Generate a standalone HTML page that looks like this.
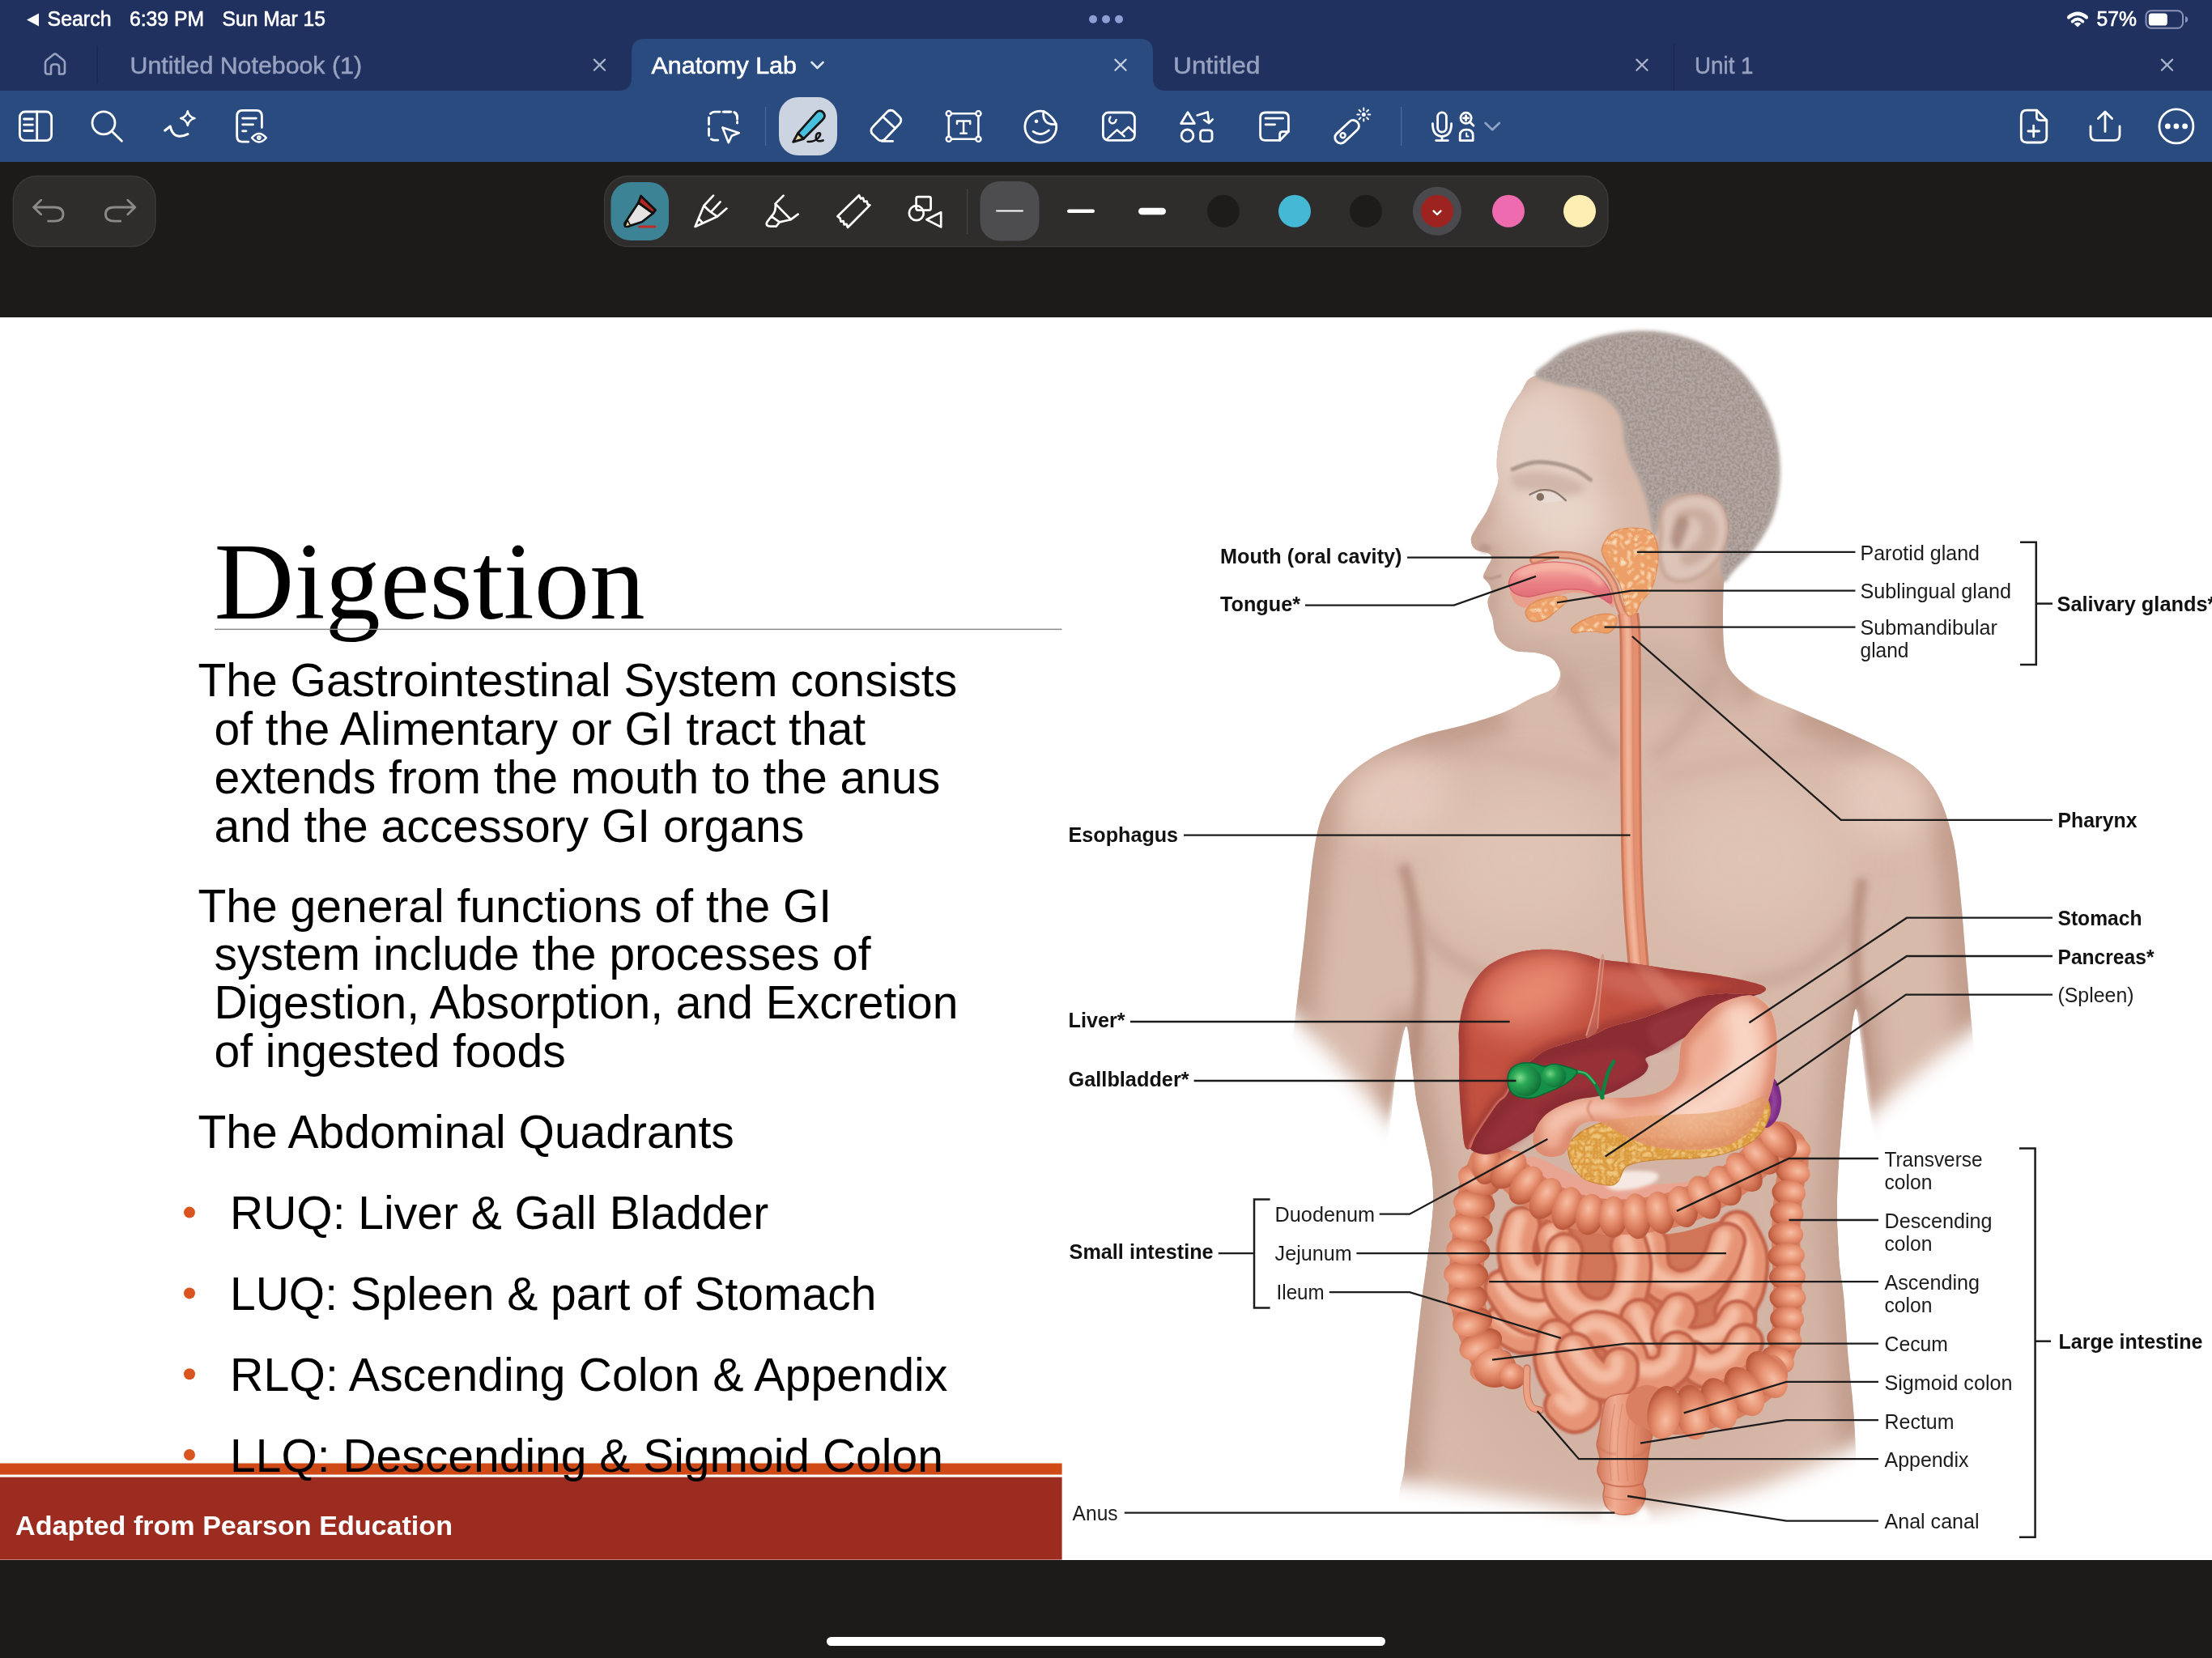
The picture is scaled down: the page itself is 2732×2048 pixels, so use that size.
<!DOCTYPE html>
<html lang="en"><head><meta charset="utf-8"><title>Anatomy Lab</title>
<style>
html,body{margin:0;padding:0;background:#1c1b19;}
body{width:2732px;height:2048px;overflow:hidden;position:relative;font-family:'Liberation Sans',sans-serif;}
#status{position:absolute;left:0;top:0;width:2732px;height:112px;background:#21315f;}
#toolbar{position:absolute;left:0;top:112px;width:2732px;height:88px;background:#294b7f;}
#work{position:absolute;left:0;top:200px;width:2732px;height:1848px;background:#1c1b19;}
#slide{position:absolute;left:0;top:391.5px;width:2732px;height:1535px;background:#fff;}
#home{position:absolute;left:1021px;top:2021.8px;width:690px;height:11px;border-radius:5.5px;background:#fff;}
svg{position:absolute;left:0;top:0;}
</style></head><body>
<div id="status"></div><div id="toolbar"></div><div id="work"></div><div id="slide"></div><div id="home"></div>
<svg width="2732" height="2048" viewBox="0 0 2732 2048">
<defs>
<clipPath id="cSlide"><rect x="0" y="391.5" width="2732" height="1535"/></clipPath>
<clipPath id="lassoClip"><path d="M870 130 H915 V153 H888 V180 H870 Z"/></clipPath>
<filter id="b1" filterUnits="userSpaceOnUse" x="1350" y="380" width="1400" height="1560"><feGaussianBlur stdDeviation="1"/></filter>
<filter id="b2" filterUnits="userSpaceOnUse" x="1350" y="380" width="1400" height="1560"><feGaussianBlur stdDeviation="2"/></filter>
<filter id="b3" filterUnits="userSpaceOnUse" x="1350" y="380" width="1400" height="1560"><feGaussianBlur stdDeviation="3"/></filter>
<filter id="b5" filterUnits="userSpaceOnUse" x="1350" y="380" width="1400" height="1560"><feGaussianBlur stdDeviation="5"/></filter>
<filter id="b8" filterUnits="userSpaceOnUse" x="1350" y="380" width="1400" height="1560"><feGaussianBlur stdDeviation="8"/></filter>
<filter id="b12" filterUnits="userSpaceOnUse" x="1350" y="380" width="1400" height="1560"><feGaussianBlur stdDeviation="12"/></filter>
<filter id="b20" filterUnits="userSpaceOnUse" x="1350" y="380" width="1400" height="1560"><feGaussianBlur stdDeviation="20"/></filter>
<filter id="b35" filterUnits="userSpaceOnUse" x="1350" y="380" width="1400" height="1560"><feGaussianBlur stdDeviation="35"/></filter>
<filter id="hairTex" filterUnits="userSpaceOnUse" x="1880" y="400" width="330" height="340">
<feTurbulence type="fractalNoise" baseFrequency="0.3" numOctaves="2" seed="3" result="n"/>
<feColorMatrix in="n" type="matrix" values="0 0 0 0 0.46  0 0 0 0 0.40  0 0 0 0 0.38  3.4 0 0 0 -1.15" result="c"/>
<feComposite in="c" in2="SourceGraphic" operator="in"/></filter>
<filter id="lumpTex" x="0" y="0" width="100%" height="100%">
<feTurbulence type="turbulence" baseFrequency="0.12" numOctaves="1" seed="8" result="n"/>
<feColorMatrix in="n" type="matrix" values="0 0 0 0 0.98  0 0 0 0 0.80  0 0 0 0 0.58  2.6 0 0 0 -0.35" result="c"/>
<feComposite in="c" in2="SourceGraphic" operator="in"/></filter>
<radialGradient id="gH" cx="0.42" cy="0.36" r="0.62"><stop offset="0" stop-color="#f6bea4"/><stop offset="0.45" stop-color="#e89373"/><stop offset="0.85" stop-color="#cd6d4e"/><stop offset="1" stop-color="#bb5a3d"/></radialGradient>
<radialGradient id="gH2" cx="0.4" cy="0.35" r="0.65"><stop offset="0" stop-color="#f6bfa6"/><stop offset="0.5" stop-color="#e8987a"/><stop offset="1" stop-color="#c9694e"/></radialGradient>
<linearGradient id="gLiver" x1="0" y1="0" x2="0.6" y2="1"><stop offset="0" stop-color="#b94a42"/><stop offset="0.45" stop-color="#c4574c"/><stop offset="1" stop-color="#9c3436"/></linearGradient>
<radialGradient id="gLiverHi" cx="0.5" cy="0.5" r="0.5"><stop offset="0" stop-color="#df7a68" stop-opacity="0.95"/><stop offset="1" stop-color="#df7a68" stop-opacity="0"/></radialGradient>
<linearGradient id="gStom" x1="0" y1="0" x2="1" y2="0.3"><stop offset="0" stop-color="#eaa58c"/><stop offset="0.5" stop-color="#f6c9b4"/><stop offset="1" stop-color="#e4967a"/></linearGradient>
<radialGradient id="gGall" cx="0.35" cy="0.4" r="0.7"><stop offset="0" stop-color="#7fdc8c"/><stop offset="0.35" stop-color="#2aa755"/><stop offset="1" stop-color="#0d6a35"/></radialGradient>
<linearGradient id="gTongue" x1="0" y1="0" x2="0" y2="1"><stop offset="0" stop-color="#f6b3a2"/><stop offset="0.5" stop-color="#ea8286"/><stop offset="1" stop-color="#dc6474"/></linearGradient>
<linearGradient id="gRect" x1="0" y1="0" x2="1" y2="0"><stop offset="0" stop-color="#cf7558"/><stop offset="0.3" stop-color="#f0ab90"/><stop offset="0.62" stop-color="#e48e70"/><stop offset="1" stop-color="#c5654a"/></linearGradient>
<linearGradient id="gSkinV" x1="0" y1="0" x2="0" y2="1"><stop offset="0" stop-color="#dcc3b6"/><stop offset="1" stop-color="#d9bdb0"/></linearGradient>
<clipPath id="cTorso"><path d="M1950 760 C1920.7 766.7 1935.8 787.5 1932 800 C1928.2 812.5 1929.5 826.5 1927 835 C1924.5 843.5 1922.8 846.5 1917 851 C1911.2 855.5 1902.0 857.2 1892 862 C1882.0 866.8 1870.5 874.5 1857 880 C1843.5 885.5 1825.5 890.8 1811 895 C1796.5 899.2 1781.0 902.0 1770 905 C1759.0 908.0 1755.8 908.8 1745 913 C1734.2 917.2 1717.2 923.5 1705 930 C1692.8 936.5 1681.5 944.0 1672 952 C1662.5 960.0 1654.7 968.3 1648 978 C1641.3 987.7 1636.2 998.0 1632 1010 C1627.8 1022.0 1625.5 1035.0 1623 1050 C1620.5 1065.0 1619.0 1081.7 1617 1100 C1615.0 1118.3 1613.2 1140.0 1611 1160 C1608.8 1180.0 1606.3 1200.0 1604 1220 C1601.7 1240.0 1599.3 1260.0 1597 1280 C1594.7 1300.0 1592.2 1320.0 1590 1340 C1587.8 1360.0 1585.3 1380.0 1584 1400 C1582.7 1420.0 1572.7 1446.7 1582 1460 C1591.3 1473.3 1619.3 1480.0 1640 1480 C1660.7 1480.0 1693.3 1473.3 1706 1460 C1718.7 1446.7 1713.3 1420.0 1716 1400 C1718.7 1380.0 1719.7 1358.0 1722 1340 C1724.3 1322.0 1727.5 1304.0 1730 1292 C1732.5 1280.0 1735.0 1266.7 1737 1268 C1739.0 1269.3 1740.0 1284.8 1742 1300 C1744.0 1315.2 1746.0 1340.7 1749 1359 C1752.0 1377.3 1756.8 1394.8 1760 1410 C1763.2 1425.2 1766.3 1437.5 1768 1450 C1769.7 1462.5 1770.2 1473.3 1770 1485 C1769.8 1496.7 1769.2 1501.2 1767 1520 C1764.8 1538.8 1760.2 1571.7 1757 1598 C1753.8 1624.3 1750.8 1651.5 1748 1678 C1745.2 1704.5 1742.2 1735.0 1740 1757 C1737.8 1779.0 1736.2 1787.8 1735 1810 C1733.8 1832.2 1713.8 1872.5 1733 1890 C1752.2 1907.5 1805.5 1910.0 1850 1915 C1894.5 1920.0 1950.0 1920.0 2000 1920 C2050.0 1920.0 2101.3 1920.0 2150 1915 C2198.7 1910.0 2268.3 1909.2 2292 1890 C2315.7 1870.8 2292.5 1825.0 2292 1800 C2291.5 1775.0 2290.5 1760.0 2289 1740 C2287.5 1720.0 2285.0 1703.3 2283 1680 C2281.0 1656.7 2278.8 1620.0 2277 1600 C2275.2 1580.0 2273.3 1576.7 2272 1560 C2270.7 1543.3 2269.2 1519.8 2269 1500 C2268.8 1480.2 2269.7 1463.3 2271 1441 C2272.3 1418.7 2274.8 1390.3 2277 1366 C2279.2 1341.7 2281.5 1315.0 2284 1295 C2286.5 1275.0 2289.5 1246.7 2292 1246 C2294.5 1245.3 2296.3 1271.0 2299 1291 C2301.7 1311.0 2304.8 1344.5 2308 1366 C2311.2 1387.5 2315.0 1404.3 2318 1420 C2321.0 1435.7 2314.0 1450.0 2326 1460 C2338.0 1470.0 2369.0 1480.0 2390 1480 C2411.0 1480.0 2442.3 1473.3 2452 1460 C2461.7 1446.7 2449.8 1420.0 2448 1400 C2446.2 1380.0 2443.0 1360.7 2441 1340 C2439.0 1319.3 2437.8 1297.7 2436 1276 C2434.2 1254.3 2432.2 1235.3 2430 1210 C2427.8 1184.7 2425.3 1149.2 2423 1124 C2420.7 1098.8 2418.3 1075.5 2416 1059 C2413.7 1042.5 2412.0 1036.2 2409 1025 C2406.0 1013.8 2402.3 1001.8 2398 992 C2393.7 982.2 2389.3 974.0 2383 966 C2376.7 958.0 2369.7 950.8 2360 944 C2350.3 937.2 2339.0 932.0 2325 925 C2311.0 918.0 2293.5 909.8 2276 902 C2258.5 894.2 2237.7 885.7 2220 878 C2202.3 870.3 2183.8 864.3 2170 856 C2156.2 847.7 2144.3 837.3 2137 828 C2129.7 818.7 2130.8 811.3 2126 800 C2121.2 788.7 2137.3 766.7 2108 760 C2078.7 753.3 1979.3 753.3 1950 760 Z"/></clipPath>
<clipPath id="cFace"><path d="M1897.1 464.0 C1882.8 468.3 1884.8 475.5 1878.7 483.9 C1872.6 492.3 1865.0 503.4 1860.3 514.6 C1855.6 525.9 1852.4 541.2 1850.5 551.4 C1848.6 561.6 1848.7 569.3 1848.7 575.9 C1848.8 582.5 1851.1 586.1 1850.8 591.2 C1850.5 596.3 1849.2 599.9 1846.8 606.5 C1844.4 613.1 1840.4 623.3 1836.4 631.0 C1832.4 638.7 1826.2 646.6 1822.9 652.5 C1819.6 658.4 1817.0 662.0 1816.8 666.3 C1816.6 670.6 1818.3 675.6 1822.0 678.5 C1825.7 681.4 1835.6 681.8 1838.9 683.8 C1842.2 685.8 1842.3 687.8 1841.9 690.8 C1841.5 693.8 1838.0 697.9 1836.4 701.5 C1834.8 705.1 1831.7 709.0 1832.1 712.3 C1832.5 715.6 1837.3 718.5 1838.9 721.5 C1840.5 724.5 1842.1 727.3 1841.9 730.6 C1841.7 733.9 1838.1 737.8 1837.6 741.4 C1837.1 745.0 1837.9 748.3 1838.9 752.1 C1839.9 755.9 1842.2 759.5 1843.5 764.4 C1844.8 769.2 1844.5 776.1 1846.5 781.2 C1848.5 786.3 1851.4 791.2 1855.7 795.0 C1860.0 798.8 1865.7 802.3 1872.6 804.2 C1879.5 806.1 1889.7 804.8 1897.1 806.3 C1904.5 807.8 1912.2 809.9 1917.0 813.4 C1921.8 816.9 1924.4 822.4 1926.2 827.2 C1928.0 832.1 1928.5 837.9 1927.8 842.5 C1927.1 847.1 1924.2 850.2 1922.2 854.8 C1920.2 859.4 1913.5 860.4 1915.5 870.1 C1917.5 879.8 1905.3 903.8 1933.9 913.0 C1962.5 922.2 2043.7 925.3 2087.1 925.3 C2130.5 925.3 2178.1 922.2 2194.4 913.0 C2210.8 903.8 2190.8 880.3 2185.2 870.1 C2179.6 859.9 2168.7 858.7 2160.7 851.7 C2152.7 844.7 2142.6 836.7 2137.4 828.1 C2132.2 819.5 2130.9 813.9 2129.4 799.9 C2127.9 785.9 2127.8 760.3 2128.2 744.4 C2128.6 728.5 2128.2 722.5 2131.6 704.6 C2135.0 686.7 2145.6 663.8 2148.4 637.2 C2151.2 610.6 2163.7 574.8 2148.4 545.2 C2133.1 515.6 2087.2 473.9 2056.5 459.4 C2025.8 444.8 1991.1 457.1 1964.5 457.9 C1937.9 458.7 1911.4 459.7 1897.1 464.0 Z"/></clipPath>
<clipPath id="cNoCore"><path clip-rule="evenodd" d="M1400 1000 H2700 V2000 H1400 Z M1738 1262 L1742 1300 L1749 1359 L1760 1410 L1768 1450 L1770 1485 L1767 1520 L1757 1598 L1748 1678 L1740 1757 L1735 1810 L1733 1960 L2292 1960 L2292 1800 L2289 1740 L2283 1680 L2277 1600 L2272 1560 L2269 1500 L2271 1441 L2277 1366 L2284 1295 L2293 1240 Z"/></clipPath>
<clipPath id="cLiverL"><path d="M1802.3 1299.2 C1802.2 1287.9 1801.0 1281.3 1801.9 1271.4 C1802.8 1261.5 1804.9 1249.2 1807.9 1239.6 C1810.9 1230.0 1814.5 1221.7 1819.8 1213.7 C1825.1 1205.7 1831.4 1197.8 1839.7 1191.8 C1848.0 1185.8 1859.3 1181.1 1869.6 1177.9 C1879.9 1174.8 1890.8 1173.5 1901.4 1172.9 C1912.0 1172.3 1923.2 1173.1 1933.2 1174.3 C1943.2 1175.5 1953.8 1178.1 1961.1 1179.9 C1968.4 1181.7 1970.7 1183.6 1977.0 1184.9 C1983.3 1186.2 1990.3 1186.7 1998.9 1187.8 C2007.5 1188.9 2017.1 1190.1 2028.7 1191.8 C2040.3 1193.5 2055.2 1196.0 2068.5 1197.8 C2081.8 1199.6 2095.0 1200.8 2108.3 1202.8 C2121.6 1204.8 2137.5 1207.5 2148.1 1209.7 C2158.7 1211.9 2166.4 1213.9 2171.9 1215.7 C2177.4 1217.5 2180.2 1218.9 2180.9 1220.7 C2181.6 1222.5 2179.7 1225.4 2175.9 1226.6 C2172.1 1227.8 2165.9 1227.9 2158.0 1228.0 C2150.1 1228.1 2137.8 1226.8 2128.2 1227.2 C2118.6 1227.6 2108.6 1228.7 2100.3 1230.6 C2092.0 1232.5 2087.0 1235.3 2078.4 1238.6 C2069.8 1241.9 2058.5 1246.8 2048.6 1250.5 C2038.7 1254.2 2028.8 1257.5 2018.8 1260.5 C2008.8 1263.5 1997.9 1265.2 1988.9 1268.4 C1980.0 1271.6 1973.4 1276.2 1965.1 1279.4 C1956.8 1282.6 1948.5 1284.3 1939.2 1287.3 C1929.9 1290.3 1917.7 1293.3 1909.4 1297.3 C1901.1 1301.3 1895.2 1307.6 1889.5 1311.2 C1883.8 1314.8 1880.2 1312.5 1875.5 1319.1 C1870.8 1325.7 1865.9 1343.7 1861.6 1351.0 C1857.3 1358.3 1854.0 1357.6 1849.7 1362.9 C1845.4 1368.2 1840.5 1375.8 1835.8 1382.8 C1831.1 1389.8 1825.1 1398.7 1821.8 1404.7 C1818.5 1410.7 1818.1 1416.9 1815.9 1418.6 C1813.8 1420.2 1810.7 1421.2 1808.9 1414.6 C1807.1 1408.0 1806.0 1391.4 1804.9 1378.8 C1803.8 1366.2 1802.7 1352.3 1802.3 1339.0 C1801.9 1325.7 1802.4 1310.5 1802.3 1299.2 Z"/></clipPath>
<clipPath id="cStom"><path d="M2162.0 1229.6 C2168.6 1230.6 2175.3 1235.3 2179.9 1239.6 C2184.5 1243.9 2187.4 1248.9 2189.8 1255.5 C2192.2 1262.1 2193.5 1270.5 2194.2 1279.4 C2194.9 1288.4 2194.5 1299.3 2193.8 1309.2 C2193.1 1319.1 2192.1 1329.0 2189.8 1339.0 C2187.5 1349.0 2184.2 1359.6 2179.9 1368.9 C2175.6 1378.2 2171.0 1387.4 2164.0 1394.7 C2157.0 1402.0 2147.4 1408.4 2138.1 1412.6 C2128.8 1416.8 2119.9 1418.4 2108.3 1419.6 C2096.7 1420.8 2080.1 1420.3 2068.5 1419.6 C2056.9 1418.9 2047.7 1417.8 2038.7 1415.6 C2029.8 1413.4 2022.4 1410.2 2014.8 1406.7 C2007.2 1403.2 1999.5 1398.2 1992.9 1394.7 C1986.3 1391.2 1980.3 1387.3 1975.0 1385.8 C1969.7 1384.3 1965.4 1384.8 1961.1 1385.8 C1956.8 1386.8 1952.3 1388.5 1949.1 1391.7 C1945.8 1394.9 1943.5 1400.6 1941.6 1404.7 C1939.7 1408.8 1939.7 1412.9 1937.6 1416.6 C1935.5 1420.2 1933.2 1424.5 1929.2 1426.6 C1925.2 1428.6 1918.3 1429.5 1913.3 1428.9 C1908.3 1428.3 1902.7 1426.4 1899.4 1423.0 C1896.1 1419.6 1893.7 1413.8 1893.4 1408.7 C1893.1 1403.7 1894.7 1398.0 1897.4 1392.7 C1900.1 1387.4 1904.1 1381.4 1909.4 1376.8 C1914.7 1372.2 1922.6 1367.9 1929.2 1364.9 C1935.8 1361.9 1942.5 1360.4 1949.1 1358.9 C1955.7 1357.4 1962.4 1356.4 1969.0 1355.9 C1975.6 1355.4 1982.3 1355.9 1988.9 1355.9 C1995.5 1355.9 2002.2 1356.2 2008.8 1355.9 C2015.4 1355.6 2022.1 1355.2 2028.7 1354.0 C2035.3 1352.8 2042.6 1351.5 2048.6 1349.0 C2054.6 1346.5 2060.5 1343.0 2064.5 1339.0 C2068.5 1335.0 2070.8 1330.4 2072.5 1325.1 C2074.2 1319.8 2073.8 1313.2 2074.5 1307.2 C2075.2 1301.2 2074.8 1294.3 2076.5 1289.3 C2078.2 1284.3 2080.4 1282.4 2084.4 1277.4 C2088.4 1272.4 2094.7 1265.2 2100.3 1259.5 C2105.9 1253.8 2111.6 1247.8 2118.2 1243.5 C2124.8 1239.2 2132.8 1235.9 2140.1 1233.6 C2147.4 1231.3 2155.4 1228.6 2162.0 1229.6 Z"/></clipPath>
<filter id="pancTex" x="0" y="0" width="100%" height="100%">
<feTurbulence type="turbulence" baseFrequency="0.13" numOctaves="2" seed="5" result="n"/>
<feColorMatrix in="n" type="matrix" values="0 0 0 0 0.96  0 0 0 0 0.77  0 0 0 0 0.38  2.4 0 0 0 -0.3" result="c"/>
<feComposite in="c" in2="SourceGraphic" operator="in"/></filter>
</defs>
<g id="figure" clip-path="url(#cSlide)">
<g id="body">
<path d="M1950 760 C1920.7 766.7 1935.8 787.5 1932 800 C1928.2 812.5 1929.5 826.5 1927 835 C1924.5 843.5 1922.8 846.5 1917 851 C1911.2 855.5 1902.0 857.2 1892 862 C1882.0 866.8 1870.5 874.5 1857 880 C1843.5 885.5 1825.5 890.8 1811 895 C1796.5 899.2 1781.0 902.0 1770 905 C1759.0 908.0 1755.8 908.8 1745 913 C1734.2 917.2 1717.2 923.5 1705 930 C1692.8 936.5 1681.5 944.0 1672 952 C1662.5 960.0 1654.7 968.3 1648 978 C1641.3 987.7 1636.2 998.0 1632 1010 C1627.8 1022.0 1625.5 1035.0 1623 1050 C1620.5 1065.0 1619.0 1081.7 1617 1100 C1615.0 1118.3 1613.2 1140.0 1611 1160 C1608.8 1180.0 1606.3 1200.0 1604 1220 C1601.7 1240.0 1599.3 1260.0 1597 1280 C1594.7 1300.0 1592.2 1320.0 1590 1340 C1587.8 1360.0 1585.3 1380.0 1584 1400 C1582.7 1420.0 1572.7 1446.7 1582 1460 C1591.3 1473.3 1619.3 1480.0 1640 1480 C1660.7 1480.0 1693.3 1473.3 1706 1460 C1718.7 1446.7 1713.3 1420.0 1716 1400 C1718.7 1380.0 1719.7 1358.0 1722 1340 C1724.3 1322.0 1727.5 1304.0 1730 1292 C1732.5 1280.0 1735.0 1266.7 1737 1268 C1739.0 1269.3 1740.0 1284.8 1742 1300 C1744.0 1315.2 1746.0 1340.7 1749 1359 C1752.0 1377.3 1756.8 1394.8 1760 1410 C1763.2 1425.2 1766.3 1437.5 1768 1450 C1769.7 1462.5 1770.2 1473.3 1770 1485 C1769.8 1496.7 1769.2 1501.2 1767 1520 C1764.8 1538.8 1760.2 1571.7 1757 1598 C1753.8 1624.3 1750.8 1651.5 1748 1678 C1745.2 1704.5 1742.2 1735.0 1740 1757 C1737.8 1779.0 1736.2 1787.8 1735 1810 C1733.8 1832.2 1713.8 1872.5 1733 1890 C1752.2 1907.5 1805.5 1910.0 1850 1915 C1894.5 1920.0 1950.0 1920.0 2000 1920 C2050.0 1920.0 2101.3 1920.0 2150 1915 C2198.7 1910.0 2268.3 1909.2 2292 1890 C2315.7 1870.8 2292.5 1825.0 2292 1800 C2291.5 1775.0 2290.5 1760.0 2289 1740 C2287.5 1720.0 2285.0 1703.3 2283 1680 C2281.0 1656.7 2278.8 1620.0 2277 1600 C2275.2 1580.0 2273.3 1576.7 2272 1560 C2270.7 1543.3 2269.2 1519.8 2269 1500 C2268.8 1480.2 2269.7 1463.3 2271 1441 C2272.3 1418.7 2274.8 1390.3 2277 1366 C2279.2 1341.7 2281.5 1315.0 2284 1295 C2286.5 1275.0 2289.5 1246.7 2292 1246 C2294.5 1245.3 2296.3 1271.0 2299 1291 C2301.7 1311.0 2304.8 1344.5 2308 1366 C2311.2 1387.5 2315.0 1404.3 2318 1420 C2321.0 1435.7 2314.0 1450.0 2326 1460 C2338.0 1470.0 2369.0 1480.0 2390 1480 C2411.0 1480.0 2442.3 1473.3 2452 1460 C2461.7 1446.7 2449.8 1420.0 2448 1400 C2446.2 1380.0 2443.0 1360.7 2441 1340 C2439.0 1319.3 2437.8 1297.7 2436 1276 C2434.2 1254.3 2432.2 1235.3 2430 1210 C2427.8 1184.7 2425.3 1149.2 2423 1124 C2420.7 1098.8 2418.3 1075.5 2416 1059 C2413.7 1042.5 2412.0 1036.2 2409 1025 C2406.0 1013.8 2402.3 1001.8 2398 992 C2393.7 982.2 2389.3 974.0 2383 966 C2376.7 958.0 2369.7 950.8 2360 944 C2350.3 937.2 2339.0 932.0 2325 925 C2311.0 918.0 2293.5 909.8 2276 902 C2258.5 894.2 2237.7 885.7 2220 878 C2202.3 870.3 2183.8 864.3 2170 856 C2156.2 847.7 2144.3 837.3 2137 828 C2129.7 818.7 2130.8 811.3 2126 800 C2121.2 788.7 2137.3 766.7 2108 760 C2078.7 753.3 1979.3 753.3 1950 760 Z" fill="#d8baab" />
<path d="M1897.1 464.0 C1882.8 468.3 1884.8 475.5 1878.7 483.9 C1872.6 492.3 1865.0 503.4 1860.3 514.6 C1855.6 525.9 1852.4 541.2 1850.5 551.4 C1848.6 561.6 1848.7 569.3 1848.7 575.9 C1848.8 582.5 1851.1 586.1 1850.8 591.2 C1850.5 596.3 1849.2 599.9 1846.8 606.5 C1844.4 613.1 1840.4 623.3 1836.4 631.0 C1832.4 638.7 1826.2 646.6 1822.9 652.5 C1819.6 658.4 1817.0 662.0 1816.8 666.3 C1816.6 670.6 1818.3 675.6 1822.0 678.5 C1825.7 681.4 1835.6 681.8 1838.9 683.8 C1842.2 685.8 1842.3 687.8 1841.9 690.8 C1841.5 693.8 1838.0 697.9 1836.4 701.5 C1834.8 705.1 1831.7 709.0 1832.1 712.3 C1832.5 715.6 1837.3 718.5 1838.9 721.5 C1840.5 724.5 1842.1 727.3 1841.9 730.6 C1841.7 733.9 1838.1 737.8 1837.6 741.4 C1837.1 745.0 1837.9 748.3 1838.9 752.1 C1839.9 755.9 1842.2 759.5 1843.5 764.4 C1844.8 769.2 1844.5 776.1 1846.5 781.2 C1848.5 786.3 1851.4 791.2 1855.7 795.0 C1860.0 798.8 1865.7 802.3 1872.6 804.2 C1879.5 806.1 1889.7 804.8 1897.1 806.3 C1904.5 807.8 1912.2 809.9 1917.0 813.4 C1921.8 816.9 1924.4 822.4 1926.2 827.2 C1928.0 832.1 1928.5 837.9 1927.8 842.5 C1927.1 847.1 1924.2 850.2 1922.2 854.8 C1920.2 859.4 1913.5 860.4 1915.5 870.1 C1917.5 879.8 1905.3 903.8 1933.9 913.0 C1962.5 922.2 2043.7 925.3 2087.1 925.3 C2130.5 925.3 2178.1 922.2 2194.4 913.0 C2210.8 903.8 2190.8 880.3 2185.2 870.1 C2179.6 859.9 2168.7 858.7 2160.7 851.7 C2152.7 844.7 2142.6 836.7 2137.4 828.1 C2132.2 819.5 2130.9 813.9 2129.4 799.9 C2127.9 785.9 2127.8 760.3 2128.2 744.4 C2128.6 728.5 2128.2 722.5 2131.6 704.6 C2135.0 686.7 2145.6 663.8 2148.4 637.2 C2151.2 610.6 2163.7 574.8 2148.4 545.2 C2133.1 515.6 2087.2 473.9 2056.5 459.4 C2025.8 444.8 1991.1 457.1 1964.5 457.9 C1937.9 458.7 1911.4 459.7 1897.1 464.0 Z" fill="#d8baab" />
<g clip-path="url(#cFace)">
<path d="M1897.1 464.0 C1894.0 467.3 1884.8 475.5 1878.7 483.9 C1872.6 492.3 1865.0 503.4 1860.3 514.6 C1855.6 525.9 1852.4 541.2 1850.5 551.4 C1848.6 561.6 1848.7 569.3 1848.7 575.9 C1848.8 582.5 1851.1 586.1 1850.8 591.2 C1850.5 596.3 1849.2 599.9 1846.8 606.5 C1844.4 613.1 1840.4 623.3 1836.4 631.0 C1832.4 638.7 1826.2 646.6 1822.9 652.5 C1819.6 658.4 1817.0 662.0 1816.8 666.3 C1816.6 670.6 1818.3 675.6 1822.0 678.5 C1825.7 681.4 1835.6 681.8 1838.9 683.8 C1842.2 685.8 1842.3 687.8 1841.9 690.8 C1841.5 693.8 1838.0 697.9 1836.4 701.5 C1834.8 705.1 1831.7 709.0 1832.1 712.3 C1832.5 715.6 1837.3 718.5 1838.9 721.5 C1840.5 724.5 1842.1 727.3 1841.9 730.6 C1841.7 733.9 1838.1 737.8 1837.6 741.4 C1837.1 745.0 1837.9 748.3 1838.9 752.1 C1839.9 755.9 1842.2 759.5 1843.5 764.4 C1844.8 769.2 1844.5 776.1 1846.5 781.2 C1848.5 786.3 1851.4 791.2 1855.7 795.0 C1860.0 798.8 1865.7 802.3 1872.6 804.2 C1879.5 806.1 1889.7 804.8 1897.1 806.3 C1904.5 807.8 1912.2 809.9 1917.0 813.4 C1921.8 816.9 1924.4 822.4 1926.2 827.2 C1928.0 832.1 1928.5 837.9 1927.8 842.5 C1927.1 847.1 1923.1 852.8 1922.2 854.8" fill="none" stroke="#c3a091" stroke-width="26" filter="url(#b8)" opacity="0.7"/>
<path d="M2131.6 704.6 C2131.0 711.2 2128.6 728.5 2128.2 744.4 C2127.8 760.3 2127.9 785.9 2129.4 799.9 C2130.9 813.9 2130.7 818.8 2137.4 828.1 C2144.2 837.5 2164.5 851.4 2169.9 856.0" fill="none" stroke="#bb9483" stroke-width="40" filter="url(#b12)" opacity="0.75"/>
<ellipse cx="1900" cy="560" rx="70" ry="90" fill="#e6d2c7" filter="url(#b20)" opacity="0.9"/>
<path d="M1921.6 814.9 C1927.7 806.2 1947.1 803.7 1964.5 799.6 C1981.9 795.5 2005.4 790.4 2025.8 790.4 C2046.2 790.4 2069.7 794.5 2087.1 799.6 C2104.5 804.7 2119.8 812.4 2130.0 821.1 C2140.2 829.8 2150.4 841.5 2148.4 851.7 C2146.4 861.9 2138.2 879.2 2117.8 882.3 C2097.4 885.4 2051.3 872.1 2025.8 870.1 C2000.2 868.1 1980.8 873.2 1964.5 870.1 C1948.2 867.0 1935.0 860.9 1927.8 851.7 C1920.6 842.5 1915.5 823.6 1921.6 814.9 Z" fill="#cdb0a3" filter="url(#b12)" opacity="0.8"/>
<path d="M1851.1 753.6 C1855.7 752.1 1867.0 772.0 1878.7 778.1 C1890.5 784.2 1907.3 788.9 1921.6 790.4 C1935.9 791.9 1954.3 785.8 1964.5 787.3 C1974.7 788.8 1988.0 795.5 1982.9 799.6 C1977.8 803.7 1951.3 810.9 1933.9 811.9 C1916.5 812.9 1892.5 809.8 1878.7 805.7 C1864.9 801.6 1855.7 796.0 1851.1 787.3 C1846.5 778.6 1846.5 755.1 1851.1 753.6 Z" fill="#cfb2a5" filter="url(#b8)" opacity="0.7"/>
<ellipse cx="1935" cy="640" rx="55" ry="50" fill="#ead6cb" filter="url(#b20)" opacity="0.9"/>
<path d="M1866.5 588.1 C1870.6 584.5 1885.9 582.0 1897.1 582.0 C1908.3 582.0 1923.7 584.5 1933.9 588.1 C1944.1 591.7 1958.4 599.4 1958.4 603.5 C1958.4 607.6 1944.1 612.2 1933.9 612.7 C1923.7 613.2 1907.3 608.0 1897.1 606.5 C1886.9 605.0 1877.7 606.6 1872.6 603.5 C1867.5 600.4 1862.4 591.7 1866.5 588.1 Z" fill="#cbb0a4" filter="url(#b5)" opacity="0.8"/>
</g>
<g clip-path="url(#cTorso)">
<path d="M1857 880 C1849.3 882.5 1825.5 890.8 1811 895 C1796.5 899.2 1781.0 902.0 1770 905 C1759.0 908.0 1755.8 908.8 1745 913 C1734.2 917.2 1717.2 923.5 1705 930 C1692.8 936.5 1681.5 944.0 1672 952 C1662.5 960.0 1654.7 968.3 1648 978 C1641.3 987.7 1636.2 998.0 1632 1010 C1627.8 1022.0 1625.5 1035.0 1623 1050 C1620.5 1065.0 1619.0 1081.7 1617 1100 C1615.0 1118.3 1613.2 1140.0 1611 1160 C1608.8 1180.0 1606.3 1200.0 1604 1220 C1601.7 1240.0 1599.3 1260.0 1597 1280 C1594.7 1300.0 1592.2 1320.0 1590 1340 C1587.8 1360.0 1585.3 1380.0 1584 1400 C1582.7 1420.0 1572.7 1446.7 1582 1460 C1591.3 1473.3 1619.3 1480.0 1640 1480 C1660.7 1480.0 1693.3 1473.3 1706 1460 C1718.7 1446.7 1713.3 1420.0 1716 1400 C1718.7 1380.0 1719.7 1358.0 1722 1340 C1724.3 1322.0 1727.5 1304.0 1730 1292 C1732.5 1280.0 1735.0 1266.7 1737 1268 C1739.0 1269.3 1740.0 1284.8 1742 1300 C1744.0 1315.2 1746.0 1340.7 1749 1359 C1752.0 1377.3 1756.8 1394.8 1760 1410 C1763.2 1425.2 1766.3 1437.5 1768 1450 C1769.7 1462.5 1770.2 1473.3 1770 1485 C1769.8 1496.7 1769.2 1501.2 1767 1520 C1764.8 1538.8 1760.2 1571.7 1757 1598 C1753.8 1624.3 1750.8 1651.5 1748 1678 C1745.2 1704.5 1742.2 1735.0 1740 1757 C1737.8 1779.0 1736.2 1787.8 1735 1810 C1733.8 1832.2 1713.8 1872.5 1733 1890 C1752.2 1907.5 1805.5 1910.0 1850 1915 C1894.5 1920.0 1950.0 1920.0 2000 1920 C2050.0 1920.0 2101.3 1920.0 2150 1915 C2198.7 1910.0 2268.3 1909.2 2292 1890 C2315.7 1870.8 2292.5 1825.0 2292 1800 C2291.5 1775.0 2290.5 1760.0 2289 1740 C2287.5 1720.0 2285.0 1703.3 2283 1680 C2281.0 1656.7 2278.8 1620.0 2277 1600 C2275.2 1580.0 2273.3 1576.7 2272 1560 C2270.7 1543.3 2269.2 1519.8 2269 1500 C2268.8 1480.2 2269.7 1463.3 2271 1441 C2272.3 1418.7 2274.8 1390.3 2277 1366 C2279.2 1341.7 2281.5 1315.0 2284 1295 C2286.5 1275.0 2289.5 1246.7 2292 1246 C2294.5 1245.3 2296.3 1271.0 2299 1291 C2301.7 1311.0 2304.8 1344.5 2308 1366 C2311.2 1387.5 2315.0 1404.3 2318 1420 C2321.0 1435.7 2314.0 1450.0 2326 1460 C2338.0 1470.0 2369.0 1480.0 2390 1480 C2411.0 1480.0 2442.3 1473.3 2452 1460 C2461.7 1446.7 2449.8 1420.0 2448 1400 C2446.2 1380.0 2443.0 1360.7 2441 1340 C2439.0 1319.3 2437.8 1297.7 2436 1276 C2434.2 1254.3 2432.2 1235.3 2430 1210 C2427.8 1184.7 2425.3 1149.2 2423 1124 C2420.7 1098.8 2418.3 1075.5 2416 1059 C2413.7 1042.5 2412.0 1036.2 2409 1025 C2406.0 1013.8 2402.3 1001.8 2398 992 C2393.7 982.2 2389.3 974.0 2383 966 C2376.7 958.0 2369.7 950.8 2360 944 C2350.3 937.2 2339.0 932.0 2325 925 C2311.0 918.0 2293.5 909.8 2276 902 C2258.5 894.2 2229.3 882.0 2220 878" fill="none" stroke="#bb9483" stroke-width="46" filter="url(#b12)" opacity="0.75"/>
<ellipse cx="1725" cy="985" rx="70" ry="55" fill="#e6cbbd" filter="url(#b20)" opacity="0.9"/>
<ellipse cx="2330" cy="985" rx="60" ry="55" fill="#e6cbbd" filter="url(#b20)" opacity="0.9"/>
<ellipse cx="1880" cy="1060" rx="110" ry="90" fill="#e1c6b8" filter="url(#b35)" opacity="0.8"/>
<ellipse cx="2160" cy="1060" rx="110" ry="90" fill="#e1c6b8" filter="url(#b35)" opacity="0.8"/>
<path d="M1733 1068 Q1750 1120 1755 1207 Q1752 1260 1741 1330" fill="none" stroke="#b68c7d" stroke-width="14" filter="url(#b5)" opacity="0.85"/>
<path d="M2300 1085 Q2290 1150 2292 1200 Q2296 1260 2303 1330" fill="none" stroke="#b68c7d" stroke-width="14" filter="url(#b5)" opacity="0.85"/>
<path d="M1745 1130 Q1790 1210 1900 1215" fill="none" stroke="#c4a092" stroke-width="16" filter="url(#b8)" opacity="0.7"/>
<path d="M2290 1130 Q2250 1210 2150 1215" fill="none" stroke="#c4a092" stroke-width="16" filter="url(#b8)" opacity="0.7"/>
<path d="M1935 830 Q1960 900 2000 935" fill="none" stroke="#c4a092" stroke-width="22" filter="url(#b8)" opacity="0.7"/>
<path d="M2120 830 Q2090 900 2040 935" fill="none" stroke="#c4a092" stroke-width="18" filter="url(#b8)" opacity="0.55"/>
<path d="M1780 925 Q1880 930 1990 960" fill="none" stroke="#ccab9e" stroke-width="14" filter="url(#b8)" opacity="0.6"/>
<path d="M2290 925 Q2180 930 2050 960" fill="none" stroke="#ccab9e" stroke-width="14" filter="url(#b8)" opacity="0.6"/>
<ellipse cx="2010" cy="1560" rx="260" ry="300" fill="#cfae9f" filter="url(#b35)" opacity="0.55"/>
</g>
<g clip-path="url(#cNoCore)">
<path d="M1738 1268 L1727 1320 L1720 1360 L1712 1400 L1700 1470 L1790 1470 L1760 1300 Z" fill="#fff" filter="url(#b3)"/>
<path d="M2293 1246 L2300 1291 L2309 1366 L2316 1400 L2330 1470 L2250 1470 L2270 1290 Z" fill="#fff" filter="url(#b3)"/>
<path d="M1480 1222 L1560 1230 L1600 1254 L1724 1392 L1750 1430 L1790 1440 L1790 1580 L1480 1580 Z" fill="#fff" filter="url(#b12)"/>
<path d="M1480 1290 L1590 1300 L1700 1420 L1790 1470 L1790 1580 L1480 1580 Z" fill="#fff" filter="url(#b8)"/>
<path d="M2580 1238 L2470 1250 L2436 1270 L2306 1378 L2284 1420 L2250 1440 L2250 1580 L2580 1580 Z" fill="#fff" filter="url(#b12)"/>
<path d="M2580 1310 L2440 1320 L2330 1420 L2250 1470 L2250 1580 L2580 1580 Z" fill="#fff" filter="url(#b8)"/>
</g>
<path d="M1680 1815 L1735 1830 L1800 1840 L1900 1855 L1960 1866 L2050 1866 L2170 1838 L2238 1812 L2292 1784 L2350 1760 L2350 1980 L1680 1980 Z" fill="#fff" filter="url(#b12)"/>
<rect x="1680" y="1885" width="680" height="80" fill="#fff" filter="url(#b5)"/>
<path d="M1897.1 463.1 C1895.6 459.1 1906.3 453.8 1912.4 448.7 C1918.5 443.6 1925.2 437.2 1933.9 432.5 C1942.6 427.8 1954.3 423.5 1964.5 420.2 C1974.7 416.9 1985.0 414.5 1995.2 412.8 C2005.4 411.1 2015.6 410.0 2025.8 409.8 C2036.0 409.6 2046.3 410.3 2056.5 411.9 C2066.7 413.5 2076.9 416.0 2087.1 419.6 C2097.3 423.2 2108.1 427.5 2117.8 433.4 C2127.5 439.3 2137.1 446.9 2145.3 454.8 C2153.5 462.7 2160.4 471.4 2166.8 480.9 C2173.2 490.3 2179.2 500.8 2183.7 511.5 C2188.2 522.2 2191.5 534.5 2193.8 545.2 C2196.1 555.9 2197.1 565.7 2197.4 575.9 C2197.8 586.1 2197.3 596.3 2195.9 606.5 C2194.5 616.7 2192.1 628.0 2188.9 637.2 C2185.7 646.4 2181.2 654.1 2176.6 661.7 C2172.0 669.4 2166.4 677.0 2161.3 683.1 C2156.2 689.2 2150.3 693.9 2146.0 698.5 C2141.7 703.1 2138.2 707.5 2135.5 710.7 C2132.8 713.9 2131.5 719.5 2130.0 717.5 C2128.5 715.5 2126.4 706.8 2126.3 698.5 C2126.2 690.2 2130.8 680.1 2129.4 667.8 C2128.0 655.5 2124.9 634.3 2117.8 624.9 C2110.8 615.5 2097.3 611.9 2087.1 611.1 C2076.9 610.3 2063.4 612.9 2056.5 620.3 C2049.6 627.7 2048.0 649.1 2045.7 655.6 C2043.4 662.1 2043.7 661.2 2042.7 659.2 C2041.7 657.2 2041.0 650.0 2039.6 643.3 C2038.2 636.6 2036.7 627.0 2034.4 618.8 C2032.1 610.6 2029.2 602.5 2025.8 594.3 C2022.4 586.1 2017.4 578.0 2014.2 569.8 C2011.0 561.6 2008.4 553.4 2006.8 545.2 C2005.2 537.0 2006.9 528.4 2004.4 520.7 C2002.0 513.1 1997.7 505.3 1992.1 499.3 C1986.5 493.3 1978.4 488.2 1970.7 484.6 C1963.0 481.0 1954.3 479.8 1946.1 477.8 C1937.9 475.9 1929.8 475.3 1921.6 472.9 C1913.4 470.4 1898.6 467.1 1897.1 463.1 Z" fill="#a1938c" filter="url(#b2)"/>
<path d="M1897.1 463.1 C1895.6 459.1 1906.3 453.8 1912.4 448.7 C1918.5 443.6 1925.2 437.2 1933.9 432.5 C1942.6 427.8 1954.3 423.5 1964.5 420.2 C1974.7 416.9 1985.0 414.5 1995.2 412.8 C2005.4 411.1 2015.6 410.0 2025.8 409.8 C2036.0 409.6 2046.3 410.3 2056.5 411.9 C2066.7 413.5 2076.9 416.0 2087.1 419.6 C2097.3 423.2 2108.1 427.5 2117.8 433.4 C2127.5 439.3 2137.1 446.9 2145.3 454.8 C2153.5 462.7 2160.4 471.4 2166.8 480.9 C2173.2 490.3 2179.2 500.8 2183.7 511.5 C2188.2 522.2 2191.5 534.5 2193.8 545.2 C2196.1 555.9 2197.1 565.7 2197.4 575.9 C2197.8 586.1 2197.3 596.3 2195.9 606.5 C2194.5 616.7 2192.1 628.0 2188.9 637.2 C2185.7 646.4 2181.2 654.1 2176.6 661.7 C2172.0 669.4 2166.4 677.0 2161.3 683.1 C2156.2 689.2 2150.3 693.9 2146.0 698.5 C2141.7 703.1 2138.2 707.5 2135.5 710.7 C2132.8 713.9 2131.5 719.5 2130.0 717.5 C2128.5 715.5 2126.4 706.8 2126.3 698.5 C2126.2 690.2 2130.8 680.1 2129.4 667.8 C2128.0 655.5 2124.9 634.3 2117.8 624.9 C2110.8 615.5 2097.3 611.9 2087.1 611.1 C2076.9 610.3 2063.4 612.9 2056.5 620.3 C2049.6 627.7 2048.0 649.1 2045.7 655.6 C2043.4 662.1 2043.7 661.2 2042.7 659.2 C2041.7 657.2 2041.0 650.0 2039.6 643.3 C2038.2 636.6 2036.7 627.0 2034.4 618.8 C2032.1 610.6 2029.2 602.5 2025.8 594.3 C2022.4 586.1 2017.4 578.0 2014.2 569.8 C2011.0 561.6 2008.4 553.4 2006.8 545.2 C2005.2 537.0 2006.9 528.4 2004.4 520.7 C2002.0 513.1 1997.7 505.3 1992.1 499.3 C1986.5 493.3 1978.4 488.2 1970.7 484.6 C1963.0 481.0 1954.3 479.8 1946.1 477.8 C1937.9 475.9 1929.8 475.3 1921.6 472.9 C1913.4 470.4 1898.6 467.1 1897.1 463.1 Z" fill="#000" filter="url(#hairTex)" opacity="0.9"/>
<path d="M1897.1 463.1 C1895.6 459.1 1906.3 453.8 1912.4 448.7 C1918.5 443.6 1925.2 437.2 1933.9 432.5 C1942.6 427.8 1954.3 423.5 1964.5 420.2 C1974.7 416.9 1985.0 414.5 1995.2 412.8 C2005.4 411.1 2015.6 410.0 2025.8 409.8 C2036.0 409.6 2046.3 410.3 2056.5 411.9 C2066.7 413.5 2076.9 416.0 2087.1 419.6 C2097.3 423.2 2108.1 427.5 2117.8 433.4 C2127.5 439.3 2137.1 446.9 2145.3 454.8 C2153.5 462.7 2160.4 471.4 2166.8 480.9 C2173.2 490.3 2179.2 500.8 2183.7 511.5 C2188.2 522.2 2191.5 534.5 2193.8 545.2 C2196.1 555.9 2197.1 565.7 2197.4 575.9 C2197.8 586.1 2197.3 596.3 2195.9 606.5 C2194.5 616.7 2192.1 628.0 2188.9 637.2 C2185.7 646.4 2181.2 654.1 2176.6 661.7 C2172.0 669.4 2166.4 677.0 2161.3 683.1 C2156.2 689.2 2150.3 693.9 2146.0 698.5 C2141.7 703.1 2138.2 707.5 2135.5 710.7 C2132.8 713.9 2131.5 719.5 2130.0 717.5 C2128.5 715.5 2126.4 706.8 2126.3 698.5 C2126.2 690.2 2130.8 680.1 2129.4 667.8 C2128.0 655.5 2124.9 634.3 2117.8 624.9 C2110.8 615.5 2097.3 611.9 2087.1 611.1 C2076.9 610.3 2063.4 612.9 2056.5 620.3 C2049.6 627.7 2048.0 649.1 2045.7 655.6 C2043.4 662.1 2043.7 661.2 2042.7 659.2 C2041.7 657.2 2041.0 650.0 2039.6 643.3 C2038.2 636.6 2036.7 627.0 2034.4 618.8 C2032.1 610.6 2029.2 602.5 2025.8 594.3 C2022.4 586.1 2017.4 578.0 2014.2 569.8 C2011.0 561.6 2008.4 553.4 2006.8 545.2 C2005.2 537.0 2006.9 528.4 2004.4 520.7 C2002.0 513.1 1997.7 505.3 1992.1 499.3 C1986.5 493.3 1978.4 488.2 1970.7 484.6 C1963.0 481.0 1954.3 479.8 1946.1 477.8 C1937.9 475.9 1929.8 475.3 1921.6 472.9 C1913.4 470.4 1898.6 467.1 1897.1 463.1 Z" fill="none" stroke="#b9aca6" stroke-width="4" filter="url(#b2)" opacity="0.5"/>
<path d="M2051.9 637.2 C2053.2 630.7 2055.2 626.5 2059.5 622.5 C2063.8 618.5 2070.8 615.1 2077.9 613.3 C2085.1 611.4 2095.0 610.2 2102.4 611.4 C2109.8 612.6 2117.4 615.5 2122.4 620.3 C2127.4 625.1 2130.7 633.3 2132.5 640.2 C2134.3 647.1 2134.2 654.6 2133.1 661.7 C2132.0 668.9 2129.3 676.5 2125.7 683.1 C2122.1 689.7 2117.0 696.4 2111.6 701.5 C2106.2 706.6 2099.6 711.1 2093.2 713.8 C2086.8 716.5 2079.2 717.9 2073.3 717.5 C2067.4 717.1 2061.5 714.5 2058.0 711.3 C2054.5 708.1 2053.7 703.2 2052.2 698.5 C2050.7 693.8 2049.2 689.2 2049.1 683.1 C2049.0 677.0 2051.1 669.4 2051.6 661.7 C2052.1 654.1 2050.6 643.7 2051.9 637.2 Z" fill="#dcc4b8" />
<path d="M2051.9 637.2 C2053.2 630.7 2055.2 626.5 2059.5 622.5 C2063.8 618.5 2070.8 615.1 2077.9 613.3 C2085.1 611.4 2095.0 610.2 2102.4 611.4 C2109.8 612.6 2117.4 615.5 2122.4 620.3 C2127.4 625.1 2130.7 633.3 2132.5 640.2 C2134.3 647.1 2134.2 654.6 2133.1 661.7 C2132.0 668.9 2129.3 676.5 2125.7 683.1 C2122.1 689.7 2117.0 696.4 2111.6 701.5 C2106.2 706.6 2099.6 711.1 2093.2 713.8 C2086.8 716.5 2079.2 717.9 2073.3 717.5 C2067.4 717.1 2061.5 714.5 2058.0 711.3 C2054.5 708.1 2053.7 703.2 2052.2 698.5 C2050.7 693.8 2049.2 689.2 2049.1 683.1 C2049.0 677.0 2051.1 669.4 2051.6 661.7 C2052.1 654.1 2050.6 643.7 2051.9 637.2 Z" fill="none" stroke="#c2a092" stroke-width="5" filter="url(#b2)" opacity="0.8" clip-path="url(#cEar)"/>
<path d="M2068.7 637.2 C2070.2 633.6 2077.9 629.3 2084.0 628.0 C2090.1 626.7 2099.6 627.0 2105.5 629.5 C2111.4 632.0 2116.8 637.4 2119.3 643.3 C2121.9 649.2 2122.1 658.2 2120.8 664.8 C2119.5 671.4 2115.7 678.0 2111.6 683.1 C2107.5 688.2 2101.4 692.8 2096.3 695.4 C2091.2 698.0 2084.6 700.0 2081.0 698.5 C2077.4 697.0 2073.9 689.8 2074.9 686.2 C2075.9 682.6 2083.0 681.1 2087.1 677.0 C2091.2 672.9 2097.3 666.8 2099.4 661.7 C2101.5 656.6 2101.5 650.0 2099.4 646.4 C2097.3 642.8 2091.2 639.7 2087.1 640.2 C2083.0 640.7 2078.0 649.9 2074.9 649.4 C2071.8 648.9 2067.2 640.8 2068.7 637.2 Z" fill="#c9aa9c" filter="url(#b3)" opacity="0.85"/>
<path d="M2068.7 646.4 C2071.3 641.3 2076.7 637.2 2079.5 637.2 C2082.3 637.2 2085.6 641.8 2085.6 646.4 C2085.6 651.0 2081.8 659.2 2079.5 664.8 C2077.2 670.4 2074.4 679.6 2071.8 680.1 C2069.2 680.6 2064.6 673.4 2064.1 667.8 C2063.6 662.2 2066.1 651.5 2068.7 646.4 Z" fill="#a98678" filter="url(#b3)" opacity="0.8"/>
<path d="M1868.0 579.6 C1872.3 578.2 1885.1 572.4 1894.0 571.3 C1902.9 570.2 1912.9 571.3 1921.6 572.8 C1930.3 574.3 1938.9 577.2 1946.1 580.5 C1953.2 583.8 1961.4 590.7 1964.5 592.7" fill="none" stroke="#9a857a" stroke-width="5" stroke-linecap="round" filter="url(#b1)" opacity="0.75"/>
<path d="M1891.6 610.2 C1892.1 608.1 1898.7 606.7 1903.2 606.5 C1907.7 606.3 1914.0 607.2 1918.6 609.0 C1923.2 610.8 1931.3 615.4 1930.8 617.3 C1930.3 619.2 1920.6 619.9 1915.5 620.3 C1910.4 620.6 1904.2 621.1 1900.2 619.4 C1896.2 617.7 1891.1 612.4 1891.6 610.2 Z" fill="#e9dcd4" />
<circle cx="1902.3" cy="613.9" r="4.8" fill="#86705f"/>
<path d="M1889.4 611.1 C1891.7 610.1 1898.1 605.9 1903.2 605.3 C1908.3 604.7 1915.0 605.2 1920.1 607.4 C1925.2 609.5 1931.6 616.4 1933.9 618.2" fill="none" stroke="#8b766b" stroke-width="2.2" stroke-linecap="round"/>
<path d="M1832.7 712.6 C1834.2 712.9 1838.3 714.7 1841.9 714.4 C1845.5 714.1 1852.2 711.3 1854.2 710.7" fill="none" stroke="#b89484" stroke-width="3" filter="url(#b1)"/>
<path d="M1826.6 675.5 C1827.5 674.0 1831.8 672.1 1834.3 672.4 C1836.8 672.6 1841.4 675.3 1841.9 677.0 C1842.4 678.7 1839.4 681.7 1837.3 682.5 C1835.2 683.3 1830.9 682.8 1829.1 681.6 C1827.3 680.4 1825.7 677.0 1826.6 675.5 Z" fill="#b89687" filter="url(#b2)" opacity="0.8"/>
</g>
<g id="organs">
<path d="M1894.0 691.7 C1898.6 690.7 1911.9 686.1 1921.6 685.6 C1931.3 685.1 1943.1 686.2 1952.3 688.7 C1961.5 691.2 1970.2 695.4 1976.8 700.9 C1983.4 706.4 1988.4 714.2 1992.1 721.5 C1995.8 728.8 1996.6 737.8 1998.9 744.4 C2001.2 751.0 2003.6 756.7 2005.9 761.3 C2008.2 765.9 2011.7 770.2 2012.9 772.0" fill="none" stroke="#cf7f62" stroke-width="10" stroke-linecap="round"/>
<path d="M1894.0 691.7 C1898.6 690.7 1911.9 686.1 1921.6 685.6 C1931.3 685.1 1943.1 686.2 1952.3 688.7 C1961.5 691.2 1970.2 695.4 1976.8 700.9 C1983.4 706.4 1988.4 714.2 1992.1 721.5 C1995.8 728.8 1996.6 737.8 1998.9 744.4 C2001.2 751.0 2003.6 756.7 2005.9 761.3 C2008.2 765.9 2011.7 770.2 2012.9 772.0" fill="none" stroke="#e9a488" stroke-width="5" stroke-linecap="round"/>
<path d="M1865.8 727.6 C1863.0 731.2 1867.9 740.6 1871.1 744.4 C1874.3 748.2 1879.4 750.6 1884.8 750.6 C1890.2 750.6 1894.0 747.5 1903.2 744.4 C1912.4 741.3 1927.7 733.2 1940.0 732.2 C1952.3 731.2 1968.1 735.2 1976.8 738.3 C1985.5 741.4 1990.6 752.1 1992.1 750.6 C1993.6 749.1 1995.7 734.7 1986.0 729.1 C1976.3 723.5 1950.2 717.9 1933.9 716.9 C1917.6 715.9 1899.2 721.2 1887.9 723.0 C1876.6 724.8 1868.6 724.0 1865.8 727.6 Z" fill="#e99f8d" />
<path d="M1864.0 717.5 C1865.1 713.9 1867.5 708.6 1872.0 705.2 C1876.5 701.8 1882.7 699.0 1891.0 697.2 C1899.3 695.4 1911.4 694.0 1921.6 694.2 C1931.8 694.4 1943.6 695.8 1952.3 698.5 C1961.0 701.2 1967.8 705.6 1973.7 710.7 C1979.6 715.8 1985.1 723.4 1987.8 729.1 C1990.5 734.8 1991.4 743.5 1989.7 745.0 C1988.0 746.5 1982.5 740.8 1977.4 738.3 C1972.3 735.8 1966.2 731.4 1959.0 729.7 C1951.8 728.0 1942.2 727.5 1933.9 727.9 C1925.6 728.3 1917.0 730.7 1909.4 732.2 C1901.8 733.7 1894.5 736.8 1888.5 737.1 C1882.5 737.4 1877.1 735.7 1873.2 734.0 C1869.3 732.3 1866.7 729.5 1865.2 726.7 C1863.7 724.0 1862.9 721.1 1864.0 717.5 Z" fill="url(#gTongue)" stroke="#d8606a" stroke-width="1.5"/>
<path d="M1878.7 709.2 C1882.8 707.9 1894.0 702.9 1903.2 701.5 C1912.4 700.1 1924.2 699.9 1933.9 700.9 C1943.6 701.9 1954.3 704.5 1961.5 707.7 C1968.7 710.9 1974.2 717.9 1976.8 719.9" fill="none" stroke="#f7b9a8" stroke-width="7" stroke-linecap="round" filter="url(#b3)" opacity="0.9"/>
<path d="M2011 758 C2011.4 763.3 2013.0 766.3 2013.5 790 C2014.0 813.7 2013.8 858.3 2014 900 C2014.2 941.7 2014.3 1003.3 2015 1040 C2015.7 1076.7 2016.5 1094.0 2018 1120 C2019.5 1146.0 2023.0 1183.3 2024 1196" fill="none" stroke="#cc775a" stroke-width="26"/>
<path d="M2011 758 C2011.4 763.3 2013.0 766.3 2013.5 790 C2014.0 813.7 2013.8 858.3 2014 900 C2014.2 941.7 2014.3 1003.3 2015 1040 C2015.7 1076.7 2016.5 1094.0 2018 1120 C2019.5 1146.0 2023.0 1183.3 2024 1196" fill="none" stroke="#e49070" stroke-width="20"/>
<path d="M2011 758 C2011.4 763.3 2013.0 766.3 2013.5 790 C2014.0 813.7 2013.8 858.3 2014 900 C2014.2 941.7 2014.3 1003.3 2015 1040 C2015.7 1076.7 2016.5 1094.0 2018 1120 C2019.5 1146.0 2023.0 1183.3 2024 1196" fill="none" stroke="#f3b89c" stroke-width="7" transform="translate(-3 0)" filter="url(#b2)"/>
<path d="M2011 758 C2011.4 763.3 2013.0 766.3 2013.5 790 C2014.0 813.7 2013.8 858.3 2014 900 C2014.2 941.7 2014.3 1003.3 2015 1040 C2015.7 1076.7 2016.5 1094.0 2018 1120 C2019.5 1146.0 2023.0 1183.3 2024 1196" fill="none" stroke="#d98a70" stroke-width="2" transform="translate(3 0)" opacity="0.8"/>
<path d="M1982.9 667.8 C1985.2 664.0 1987.5 659.6 1992.1 657.1 C1996.7 654.6 2003.9 653.0 2010.5 652.5 C2017.1 652.0 2026.3 652.0 2031.9 654.0 C2037.5 656.0 2041.5 659.4 2044.2 664.8 C2046.9 670.2 2047.8 678.6 2047.9 686.2 C2048.0 693.9 2046.3 703.6 2044.8 710.7 C2043.3 717.9 2041.8 723.5 2038.7 729.1 C2035.6 734.7 2029.5 739.7 2026.4 744.4 C2023.3 749.1 2023.0 754.6 2020.3 757.3 C2017.6 760.0 2012.9 762.5 2010.5 760.4 C2008.1 758.2 2007.4 750.6 2005.9 744.4 C2004.4 738.2 2003.6 729.1 2001.3 723.0 C1999.0 716.9 1995.2 712.8 1992.1 707.7 C1989.0 702.6 1985.2 696.9 1982.9 692.3 C1980.6 687.7 1978.3 684.2 1978.3 680.1 C1978.3 676.0 1980.6 671.6 1982.9 667.8 Z" fill="#eca068" stroke="#e08d55" stroke-width="1.5"/>
<path d="M1982.9 667.8 C1985.2 664.0 1987.5 659.6 1992.1 657.1 C1996.7 654.6 2003.9 653.0 2010.5 652.5 C2017.1 652.0 2026.3 652.0 2031.9 654.0 C2037.5 656.0 2041.5 659.4 2044.2 664.8 C2046.9 670.2 2047.8 678.6 2047.9 686.2 C2048.0 693.9 2046.3 703.6 2044.8 710.7 C2043.3 717.9 2041.8 723.5 2038.7 729.1 C2035.6 734.7 2029.5 739.7 2026.4 744.4 C2023.3 749.1 2023.0 754.6 2020.3 757.3 C2017.6 760.0 2012.9 762.5 2010.5 760.4 C2008.1 758.2 2007.4 750.6 2005.9 744.4 C2004.4 738.2 2003.6 729.1 2001.3 723.0 C1999.0 716.9 1995.2 712.8 1992.1 707.7 C1989.0 702.6 1985.2 696.9 1982.9 692.3 C1980.6 687.7 1978.3 684.2 1978.3 680.1 C1978.3 676.0 1980.6 671.6 1982.9 667.8 Z" fill="#000" filter="url(#lumpTex)" opacity="0.85"/>
<path d="M1884.8 754.2 C1886.1 751.1 1889.4 747.0 1894.0 744.4 C1898.6 741.8 1906.2 739.6 1912.4 738.3 C1918.6 737.0 1927.7 736.0 1931.4 736.8 C1935.1 737.6 1936.0 740.3 1934.5 743.2 C1933.0 746.1 1926.4 750.6 1922.2 754.2 C1918.0 757.8 1914.1 762.5 1909.4 764.7 C1904.7 767.0 1897.8 768.0 1894.0 767.7 C1890.2 767.4 1887.9 765.0 1886.4 762.8 C1884.9 760.5 1883.5 757.3 1884.8 754.2 Z" fill="#eca068" stroke="#e08d55" stroke-width="1.5"/>
<path d="M1884.8 754.2 C1886.1 751.1 1889.4 747.0 1894.0 744.4 C1898.6 741.8 1906.2 739.6 1912.4 738.3 C1918.6 737.0 1927.7 736.0 1931.4 736.8 C1935.1 737.6 1936.0 740.3 1934.5 743.2 C1933.0 746.1 1926.4 750.6 1922.2 754.2 C1918.0 757.8 1914.1 762.5 1909.4 764.7 C1904.7 767.0 1897.8 768.0 1894.0 767.7 C1890.2 767.4 1887.9 765.0 1886.4 762.8 C1884.9 760.5 1883.5 757.3 1884.8 754.2 Z" fill="#000" filter="url(#lumpTex)" opacity="0.85"/>
<path d="M1941.5 775.7 C1943.8 772.9 1952.0 767.6 1958.4 764.7 C1964.8 761.8 1973.7 759.0 1979.8 758.5 C1985.9 758.0 1992.5 759.2 1995.2 761.6 C1997.9 764.0 1997.3 769.2 1995.8 772.6 C1994.3 776.0 1990.2 780.6 1986.0 781.8 C1981.8 783.0 1975.8 780.3 1970.7 780.0 C1965.6 779.7 1959.7 779.7 1955.3 780.0 C1950.9 780.3 1946.9 782.5 1944.6 781.8 C1942.3 781.1 1939.2 778.6 1941.5 775.7 Z" fill="#eca068" stroke="#e08d55" stroke-width="1.5"/>
<path d="M1941.5 775.7 C1943.8 772.9 1952.0 767.6 1958.4 764.7 C1964.8 761.8 1973.7 759.0 1979.8 758.5 C1985.9 758.0 1992.5 759.2 1995.2 761.6 C1997.9 764.0 1997.3 769.2 1995.8 772.6 C1994.3 776.0 1990.2 780.6 1986.0 781.8 C1981.8 783.0 1975.8 780.3 1970.7 780.0 C1965.6 779.7 1959.7 779.7 1955.3 780.0 C1950.9 780.3 1946.9 782.5 1944.6 781.8 C1942.3 781.1 1939.2 778.6 1941.5 775.7 Z" fill="#000" filter="url(#lumpTex)" opacity="0.85"/>
</g>
<g id="abdomen"><path d="M1889.9 1428.5 C1902.6 1427.5 1932.1 1448.0 1953.2 1453.8 C1974.3 1459.6 1990.1 1463.3 2016.5 1463.3 C2042.9 1463.3 2086.1 1462.8 2111.4 1453.8 C2136.7 1444.8 2156.8 1412.7 2168.4 1409.5 C2180.0 1406.3 2185.2 1423.2 2181.0 1434.8 C2176.8 1446.4 2162.5 1468.0 2143.0 1479.1 C2123.5 1490.2 2090.3 1497.1 2063.9 1501.3 C2037.5 1505.5 2008.5 1506.0 1984.8 1504.4 C1961.1 1502.8 1939.4 1499.2 1921.5 1491.8 C1903.6 1484.4 1882.5 1470.6 1877.2 1460.1 C1871.9 1449.5 1877.2 1429.5 1889.9 1428.5 Z" fill="#eaa592" />
<path d="M1984.0 1452.4 C1986.5 1449.6 1991.5 1448.4 1998.9 1447.4 C2006.4 1446.4 2020.8 1446.2 2028.7 1446.5 C2036.7 1446.8 2043.9 1447.4 2046.6 1449.4 C2049.3 1451.4 2048.7 1455.4 2045.0 1458.4 C2041.3 1461.4 2032.7 1465.3 2024.7 1467.3 C2016.7 1469.3 2003.7 1470.8 1996.9 1470.3 C1990.1 1469.8 1986.2 1467.4 1984.0 1464.4 C1981.8 1461.4 1981.5 1455.2 1984.0 1452.4 Z" fill="#f6e9e3" filter="url(#b2)"/>
<path d="M1863.4 1500.9 C1875.5 1495.2 1905.6 1505.4 1928.5 1509.9 C1951.4 1514.4 1976.8 1525.9 2000.9 1528.0 C2025.0 1530.1 2049.2 1526.2 2073.3 1522.6 C2097.4 1519.0 2129.0 1502.7 2145.6 1506.3 C2162.2 1509.9 2168.6 1525.9 2172.8 1544.3 C2177.0 1562.7 2172.8 1595.5 2171.0 1616.6 C2169.2 1637.7 2169.1 1654.9 2161.9 1670.9 C2154.7 1686.9 2145.4 1704.3 2127.6 1712.5 C2109.8 1720.7 2076.3 1717.7 2055.2 1719.8 C2034.1 1721.9 2016.0 1721.3 2000.9 1725.2 C1985.8 1729.1 1975.0 1739.1 1964.7 1743.3 C1954.5 1747.5 1947.8 1753.5 1939.4 1750.5 C1931.0 1747.5 1920.4 1738.5 1914.1 1725.2 C1907.8 1711.9 1911.7 1683.6 1901.4 1670.9 C1891.2 1658.2 1862.2 1661.3 1852.6 1649.2 C1842.9 1637.1 1842.9 1616.0 1843.5 1598.5 C1844.1 1581.0 1852.9 1560.6 1856.2 1544.3 C1859.5 1528.0 1851.4 1506.6 1863.4 1500.9 Z" fill="#d07558" />
<g filter="url(#b1)">
<path d="M1856.2 1634.7 C1860.1 1637.1 1871.6 1647.4 1879.7 1649.2 C1887.8 1651.0 1900.8 1646.2 1905.0 1645.6" fill="none" stroke="#c4634a" stroke-width="49" stroke-linecap="round" stroke-linejoin="round"/>
<path d="M1856.2 1634.7 C1860.1 1637.1 1871.6 1647.4 1879.7 1649.2 C1887.8 1651.0 1900.8 1646.2 1905.0 1645.6" fill="none" stroke="#e69475" stroke-width="39.2" stroke-linecap="round" stroke-linejoin="round"/>
<path d="M1856.2 1634.7 C1860.1 1637.1 1871.6 1647.4 1879.7 1649.2 C1887.8 1651.0 1900.8 1646.2 1905.0 1645.6" fill="none" stroke="#f7c4ac" stroke-width="16.7" stroke-linecap="round" stroke-linejoin="round" transform="translate(-3.4 -7.3)" filter="url(#b3)" opacity="0.85"/>
<path d="M1856.2 1591.3 C1859.2 1595.5 1867.1 1610.6 1874.3 1616.6 C1881.5 1622.6 1891.8 1627.5 1899.6 1627.5 C1907.4 1627.5 1917.7 1618.4 1921.3 1616.6" fill="none" stroke="#c4634a" stroke-width="49" stroke-linecap="round" stroke-linejoin="round"/>
<path d="M1856.2 1591.3 C1859.2 1595.5 1867.1 1610.6 1874.3 1616.6 C1881.5 1622.6 1891.8 1627.5 1899.6 1627.5 C1907.4 1627.5 1917.7 1618.4 1921.3 1616.6" fill="none" stroke="#e69475" stroke-width="39.2" stroke-linecap="round" stroke-linejoin="round"/>
<path d="M1856.2 1591.3 C1859.2 1595.5 1867.1 1610.6 1874.3 1616.6 C1881.5 1622.6 1891.8 1627.5 1899.6 1627.5 C1907.4 1627.5 1917.7 1618.4 1921.3 1616.6" fill="none" stroke="#f7c4ac" stroke-width="16.7" stroke-linecap="round" stroke-linejoin="round" transform="translate(-3.4 -7.3)" filter="url(#b3)" opacity="0.85"/>
<path d="M2145.6 1518.9 C2148.0 1524.0 2158.3 1537.6 2160.1 1549.7 C2161.9 1561.8 2159.8 1579.5 2156.5 1591.3 C2153.2 1603.1 2142.9 1615.5 2140.2 1620.3" fill="none" stroke="#c4634a" stroke-width="49" stroke-linecap="round" stroke-linejoin="round"/>
<path d="M2145.6 1518.9 C2148.0 1524.0 2158.3 1537.6 2160.1 1549.7 C2161.9 1561.8 2159.8 1579.5 2156.5 1591.3 C2153.2 1603.1 2142.9 1615.5 2140.2 1620.3" fill="none" stroke="#e69475" stroke-width="39.2" stroke-linecap="round" stroke-linejoin="round"/>
<path d="M2145.6 1518.9 C2148.0 1524.0 2158.3 1537.6 2160.1 1549.7 C2161.9 1561.8 2159.8 1579.5 2156.5 1591.3 C2153.2 1603.1 2142.9 1615.5 2140.2 1620.3" fill="none" stroke="#f7c4ac" stroke-width="16.7" stroke-linecap="round" stroke-linejoin="round" transform="translate(-3.4 -7.3)" filter="url(#b3)" opacity="0.85"/>
<path d="M1879.7 1513.5 C1878.5 1518.6 1872.2 1534.0 1872.5 1544.3 C1872.8 1554.5 1876.1 1568.4 1881.5 1575.0 C1886.9 1581.6 1898.1 1586.2 1905.0 1584.1 C1911.9 1582.0 1920.7 1571.5 1923.1 1562.4 C1925.5 1553.4 1920.1 1535.2 1919.5 1529.8" fill="none" stroke="#c4634a" stroke-width="49" stroke-linecap="round" stroke-linejoin="round"/>
<path d="M1879.7 1513.5 C1878.5 1518.6 1872.2 1534.0 1872.5 1544.3 C1872.8 1554.5 1876.1 1568.4 1881.5 1575.0 C1886.9 1581.6 1898.1 1586.2 1905.0 1584.1 C1911.9 1582.0 1920.7 1571.5 1923.1 1562.4 C1925.5 1553.4 1920.1 1535.2 1919.5 1529.8" fill="none" stroke="#e69475" stroke-width="39.2" stroke-linecap="round" stroke-linejoin="round"/>
<path d="M1879.7 1513.5 C1878.5 1518.6 1872.2 1534.0 1872.5 1544.3 C1872.8 1554.5 1876.1 1568.4 1881.5 1575.0 C1886.9 1581.6 1898.1 1586.2 1905.0 1584.1 C1911.9 1582.0 1920.7 1571.5 1923.1 1562.4 C1925.5 1553.4 1920.1 1535.2 1919.5 1529.8" fill="none" stroke="#f7c4ac" stroke-width="16.7" stroke-linecap="round" stroke-linejoin="round" transform="translate(-3.4 -7.3)" filter="url(#b3)" opacity="0.85"/>
<path d="M2037.1 1537.0 C2038.0 1543.0 2037.1 1564.2 2042.5 1573.2 C2047.9 1582.2 2059.8 1589.5 2069.7 1591.3 C2079.6 1593.1 2093.2 1589.5 2102.2 1584.1 C2111.2 1578.7 2118.8 1567.2 2123.9 1558.7 C2129.0 1550.2 2131.5 1537.6 2133.0 1533.4" fill="none" stroke="#c4634a" stroke-width="49" stroke-linecap="round" stroke-linejoin="round"/>
<path d="M2037.1 1537.0 C2038.0 1543.0 2037.1 1564.2 2042.5 1573.2 C2047.9 1582.2 2059.8 1589.5 2069.7 1591.3 C2079.6 1593.1 2093.2 1589.5 2102.2 1584.1 C2111.2 1578.7 2118.8 1567.2 2123.9 1558.7 C2129.0 1550.2 2131.5 1537.6 2133.0 1533.4" fill="none" stroke="#e69475" stroke-width="39.2" stroke-linecap="round" stroke-linejoin="round"/>
<path d="M2037.1 1537.0 C2038.0 1543.0 2037.1 1564.2 2042.5 1573.2 C2047.9 1582.2 2059.8 1589.5 2069.7 1591.3 C2079.6 1593.1 2093.2 1589.5 2102.2 1584.1 C2111.2 1578.7 2118.8 1567.2 2123.9 1558.7 C2129.0 1550.2 2131.5 1537.6 2133.0 1533.4" fill="none" stroke="#f7c4ac" stroke-width="16.7" stroke-linecap="round" stroke-linejoin="round" transform="translate(-3.4 -7.3)" filter="url(#b3)" opacity="0.85"/>
<path d="M1932.2 1546.1 C1931.6 1553.6 1925.5 1578.9 1928.5 1591.3 C1931.5 1603.7 1941.2 1614.6 1950.3 1620.3 C1959.3 1626.0 1973.1 1628.1 1982.8 1625.7 C1992.5 1623.3 2002.5 1615.8 2008.2 1605.8 C2013.9 1595.8 2016.6 1577.2 2017.2 1566.0 C2017.8 1554.8 2012.7 1543.3 2011.8 1538.8" fill="none" stroke="#c4634a" stroke-width="49" stroke-linecap="round" stroke-linejoin="round"/>
<path d="M1932.2 1546.1 C1931.6 1553.6 1925.5 1578.9 1928.5 1591.3 C1931.5 1603.7 1941.2 1614.6 1950.3 1620.3 C1959.3 1626.0 1973.1 1628.1 1982.8 1625.7 C1992.5 1623.3 2002.5 1615.8 2008.2 1605.8 C2013.9 1595.8 2016.6 1577.2 2017.2 1566.0 C2017.8 1554.8 2012.7 1543.3 2011.8 1538.8" fill="none" stroke="#e69475" stroke-width="39.2" stroke-linecap="round" stroke-linejoin="round"/>
<path d="M1932.2 1546.1 C1931.6 1553.6 1925.5 1578.9 1928.5 1591.3 C1931.5 1603.7 1941.2 1614.6 1950.3 1620.3 C1959.3 1626.0 1973.1 1628.1 1982.8 1625.7 C1992.5 1623.3 2002.5 1615.8 2008.2 1605.8 C2013.9 1595.8 2016.6 1577.2 2017.2 1566.0 C2017.8 1554.8 2012.7 1543.3 2011.8 1538.8" fill="none" stroke="#f7c4ac" stroke-width="16.7" stroke-linecap="round" stroke-linejoin="round" transform="translate(-3.4 -7.3)" filter="url(#b3)" opacity="0.85"/>
<path d="M2024.4 1627.5 C2025.9 1631.1 2031.1 1642.0 2033.5 1649.2 C2035.9 1656.4 2038.0 1667.3 2038.9 1670.9" fill="none" stroke="#c4634a" stroke-width="49" stroke-linecap="round" stroke-linejoin="round"/>
<path d="M2024.4 1627.5 C2025.9 1631.1 2031.1 1642.0 2033.5 1649.2 C2035.9 1656.4 2038.0 1667.3 2038.9 1670.9" fill="none" stroke="#e69475" stroke-width="39.2" stroke-linecap="round" stroke-linejoin="round"/>
<path d="M2024.4 1627.5 C2025.9 1631.1 2031.1 1642.0 2033.5 1649.2 C2035.9 1656.4 2038.0 1667.3 2038.9 1670.9" fill="none" stroke="#f7c4ac" stroke-width="16.7" stroke-linecap="round" stroke-linejoin="round" transform="translate(-3.4 -7.3)" filter="url(#b3)" opacity="0.85"/>
<path d="M2073.3 1620.3 C2071.5 1624.5 2060.0 1638.7 2062.4 1645.6 C2064.8 1652.5 2076.9 1660.7 2087.8 1661.9 C2098.7 1663.1 2118.0 1658.2 2127.6 1652.8 C2137.2 1647.4 2142.6 1633.2 2145.6 1629.3" fill="none" stroke="#c4634a" stroke-width="49" stroke-linecap="round" stroke-linejoin="round"/>
<path d="M2073.3 1620.3 C2071.5 1624.5 2060.0 1638.7 2062.4 1645.6 C2064.8 1652.5 2076.9 1660.7 2087.8 1661.9 C2098.7 1663.1 2118.0 1658.2 2127.6 1652.8 C2137.2 1647.4 2142.6 1633.2 2145.6 1629.3" fill="none" stroke="#e69475" stroke-width="39.2" stroke-linecap="round" stroke-linejoin="round"/>
<path d="M2073.3 1620.3 C2071.5 1624.5 2060.0 1638.7 2062.4 1645.6 C2064.8 1652.5 2076.9 1660.7 2087.8 1661.9 C2098.7 1663.1 2118.0 1658.2 2127.6 1652.8 C2137.2 1647.4 2142.6 1633.2 2145.6 1629.3" fill="none" stroke="#f7c4ac" stroke-width="16.7" stroke-linecap="round" stroke-linejoin="round" transform="translate(-3.4 -7.3)" filter="url(#b3)" opacity="0.85"/>
<path d="M2087.8 1678.2 C2091.4 1680.6 2101.1 1691.7 2109.5 1692.6 C2117.9 1693.5 2130.9 1689.3 2138.4 1683.6 C2145.9 1677.9 2152.0 1662.4 2154.7 1658.2" fill="none" stroke="#c4634a" stroke-width="49" stroke-linecap="round" stroke-linejoin="round"/>
<path d="M2087.8 1678.2 C2091.4 1680.6 2101.1 1691.7 2109.5 1692.6 C2117.9 1693.5 2130.9 1689.3 2138.4 1683.6 C2145.9 1677.9 2152.0 1662.4 2154.7 1658.2" fill="none" stroke="#e69475" stroke-width="39.2" stroke-linecap="round" stroke-linejoin="round"/>
<path d="M2087.8 1678.2 C2091.4 1680.6 2101.1 1691.7 2109.5 1692.6 C2117.9 1693.5 2130.9 1689.3 2138.4 1683.6 C2145.9 1677.9 2152.0 1662.4 2154.7 1658.2" fill="none" stroke="#f7c4ac" stroke-width="16.7" stroke-linecap="round" stroke-linejoin="round" transform="translate(-3.4 -7.3)" filter="url(#b3)" opacity="0.85"/>
<path d="M1957.5 1649.2 C1959.9 1648.0 1966.0 1642.0 1972.0 1642.0 C1978.0 1642.0 1987.4 1644.4 1993.7 1649.2 C2000.0 1654.0 2005.8 1663.7 2010.0 1670.9 C2014.2 1678.1 2013.3 1687.8 2019.0 1692.6 C2024.7 1697.4 2036.5 1700.8 2044.3 1699.9 C2052.1 1699.0 2061.5 1692.6 2066.0 1687.2 C2070.5 1681.8 2070.6 1670.6 2071.5 1667.3" fill="none" stroke="#c4634a" stroke-width="49" stroke-linecap="round" stroke-linejoin="round"/>
<path d="M1957.5 1649.2 C1959.9 1648.0 1966.0 1642.0 1972.0 1642.0 C1978.0 1642.0 1987.4 1644.4 1993.7 1649.2 C2000.0 1654.0 2005.8 1663.7 2010.0 1670.9 C2014.2 1678.1 2013.3 1687.8 2019.0 1692.6 C2024.7 1697.4 2036.5 1700.8 2044.3 1699.9 C2052.1 1699.0 2061.5 1692.6 2066.0 1687.2 C2070.5 1681.8 2070.6 1670.6 2071.5 1667.3" fill="none" stroke="#e69475" stroke-width="39.2" stroke-linecap="round" stroke-linejoin="round"/>
<path d="M1957.5 1649.2 C1959.9 1648.0 1966.0 1642.0 1972.0 1642.0 C1978.0 1642.0 1987.4 1644.4 1993.7 1649.2 C2000.0 1654.0 2005.8 1663.7 2010.0 1670.9 C2014.2 1678.1 2013.3 1687.8 2019.0 1692.6 C2024.7 1697.4 2036.5 1700.8 2044.3 1699.9 C2052.1 1699.0 2061.5 1692.6 2066.0 1687.2 C2070.5 1681.8 2070.6 1670.6 2071.5 1667.3" fill="none" stroke="#f7c4ac" stroke-width="16.7" stroke-linecap="round" stroke-linejoin="round" transform="translate(-3.4 -7.3)" filter="url(#b3)" opacity="0.85"/>
<path d="M1921.3 1652.8 C1920.7 1657.3 1916.5 1671.0 1917.7 1680.0 C1918.9 1689.0 1923.7 1699.6 1928.5 1707.1 C1933.3 1714.6 1942.2 1719.8 1946.6 1725.2 C1951.0 1730.6 1955.2 1736.1 1954.8 1739.7 C1954.3 1743.3 1948.0 1747.5 1943.9 1746.9 C1939.8 1746.3 1932.7 1737.8 1930.4 1736.0" fill="none" stroke="#c4634a" stroke-width="49" stroke-linecap="round" stroke-linejoin="round"/>
<path d="M1921.3 1652.8 C1920.7 1657.3 1916.5 1671.0 1917.7 1680.0 C1918.9 1689.0 1923.7 1699.6 1928.5 1707.1 C1933.3 1714.6 1942.2 1719.8 1946.6 1725.2 C1951.0 1730.6 1955.2 1736.1 1954.8 1739.7 C1954.3 1743.3 1948.0 1747.5 1943.9 1746.9 C1939.8 1746.3 1932.7 1737.8 1930.4 1736.0" fill="none" stroke="#e69475" stroke-width="39.2" stroke-linecap="round" stroke-linejoin="round"/>
<path d="M1921.3 1652.8 C1920.7 1657.3 1916.5 1671.0 1917.7 1680.0 C1918.9 1689.0 1923.7 1699.6 1928.5 1707.1 C1933.3 1714.6 1942.2 1719.8 1946.6 1725.2 C1951.0 1730.6 1955.2 1736.1 1954.8 1739.7 C1954.3 1743.3 1948.0 1747.5 1943.9 1746.9 C1939.8 1746.3 1932.7 1737.8 1930.4 1736.0" fill="none" stroke="#f7c4ac" stroke-width="16.7" stroke-linecap="round" stroke-linejoin="round" transform="translate(-3.4 -7.3)" filter="url(#b3)" opacity="0.85"/>
<path d="M1944.8 1669.1 C1946.9 1672.4 1951.8 1682.7 1957.5 1689.0 C1963.2 1695.3 1972.4 1704.7 1979.2 1707.1 C1986.0 1709.5 1994.6 1706.8 1998.2 1703.5 C2001.8 1700.2 2000.5 1689.9 2000.9 1687.2" fill="none" stroke="#c4634a" stroke-width="49" stroke-linecap="round" stroke-linejoin="round"/>
<path d="M1944.8 1669.1 C1946.9 1672.4 1951.8 1682.7 1957.5 1689.0 C1963.2 1695.3 1972.4 1704.7 1979.2 1707.1 C1986.0 1709.5 1994.6 1706.8 1998.2 1703.5 C2001.8 1700.2 2000.5 1689.9 2000.9 1687.2" fill="none" stroke="#e69475" stroke-width="39.2" stroke-linecap="round" stroke-linejoin="round"/>
<path d="M1944.8 1669.1 C1946.9 1672.4 1951.8 1682.7 1957.5 1689.0 C1963.2 1695.3 1972.4 1704.7 1979.2 1707.1 C1986.0 1709.5 1994.6 1706.8 1998.2 1703.5 C2001.8 1700.2 2000.5 1689.9 2000.9 1687.2" fill="none" stroke="#f7c4ac" stroke-width="16.7" stroke-linecap="round" stroke-linejoin="round" transform="translate(-3.4 -7.3)" filter="url(#b3)" opacity="0.85"/>
</g>
<path d="M1842 1687 C1838.7 1679.8 1827.2 1659.3 1822 1644 C1816.8 1628.7 1812.5 1611.2 1811 1595 C1809.5 1578.8 1811.7 1562.8 1813 1547 C1814.3 1531.2 1817.2 1513.5 1819 1500 C1820.8 1486.5 1821.2 1476.5 1824 1466 C1826.8 1455.5 1834.0 1441.8 1836 1437" fill="none" stroke="#d97f62" stroke-width="42.8" stroke-linecap="round"/>
<ellipse cx="1842.0" cy="1687.0" rx="17.7" ry="28.0" fill="url(#gH)" transform="rotate(-115.2 1842.0 1687.0)"/>
<ellipse cx="1828.8" cy="1660.5" rx="17.7" ry="27.9" fill="url(#gH)" transform="rotate(-115.0 1828.8 1660.5)"/>
<ellipse cx="1818.5" cy="1632.8" rx="17.7" ry="25.1" fill="url(#gH)" transform="rotate(-106.1 1818.5 1632.8)"/>
<ellipse cx="1812.1" cy="1604.0" rx="17.7" ry="25.2" fill="url(#gH)" transform="rotate(-98.6 1812.1 1604.0)"/>
<ellipse cx="1810.7" cy="1574.5" rx="17.7" ry="27.6" fill="url(#gH)" transform="rotate(-87.3 1810.7 1574.5)"/>
<ellipse cx="1813.2" cy="1545.0" rx="17.7" ry="27.3" fill="url(#gH)" transform="rotate(-84.8 1813.2 1545.0)"/>
<ellipse cx="1816.8" cy="1515.7" rx="17.7" ry="27.1" fill="url(#gH)" transform="rotate(-81.9 1816.8 1515.7)"/>
<ellipse cx="1820.6" cy="1486.3" rx="17.7" ry="25.9" fill="url(#gH)" transform="rotate(-83.7 1820.6 1486.3)"/>
<ellipse cx="1826.9" cy="1457.5" rx="17.7" ry="26.9" fill="url(#gH)" transform="rotate(-68.6 1826.9 1457.5)"/>
<ellipse cx="1846" cy="1690" rx="27" ry="24" fill="url(#gH)"/>
<ellipse cx="1868" cy="1700" rx="17" ry="16" fill="url(#gH)"/>
<path d="M1886 1690 C1886.0 1695.3 1885.0 1714.0 1886 1722 C1887.0 1730.0 1889.3 1734.7 1892 1738 C1894.7 1741.3 1900.3 1741.3 1902 1742" fill="none" stroke="#bf5f44" stroke-width="9" stroke-linecap="round" stroke-linejoin="round"/>
<path d="M1886 1690 C1886.0 1695.3 1885.0 1714.0 1886 1722 C1887.0 1730.0 1889.3 1734.7 1892 1738 C1894.7 1741.3 1900.3 1741.3 1902 1742" fill="none" stroke="#e69475" stroke-width="7.2" stroke-linecap="round" stroke-linejoin="round"/>
<path d="M1886 1690 C1886.0 1695.3 1885.0 1714.0 1886 1722 C1887.0 1730.0 1889.3 1734.7 1892 1738 C1894.7 1741.3 1900.3 1741.3 1902 1742" fill="none" stroke="#f7c4ac" stroke-width="3.1" stroke-linecap="round" stroke-linejoin="round" transform="translate(-0.9 0.0)" filter="url(#b3)" opacity="0.85"/>
<path d="M2197 1407 C2199.7 1408.2 2209.8 1409.0 2213 1414 C2216.2 1419.0 2216.5 1428.2 2216 1437 C2215.5 1445.8 2211.7 1454.2 2210 1467 C2208.3 1479.8 2206.7 1500.5 2206 1514 C2205.3 1527.5 2205.7 1534.5 2206 1548 C2206.3 1561.5 2208.0 1579.3 2208 1595 C2208.0 1610.7 2207.8 1628.3 2206 1642 C2204.2 1655.7 2201.7 1666.3 2197 1677 C2192.3 1687.7 2181.2 1701.2 2178 1706" fill="none" stroke="#d97f62" stroke-width="35.3" stroke-linecap="round"/>
<ellipse cx="2197.0" cy="1407.0" rx="15.6" ry="21.1" fill="url(#gH)" transform="rotate(22.1 2197.0 1407.0)"/>
<ellipse cx="2215.6" cy="1421.7" rx="15.6" ry="20.8" fill="url(#gH)" transform="rotate(81.3 2215.6 1421.7)"/>
<ellipse cx="2214.2" cy="1447.6" rx="15.6" ry="21.6" fill="url(#gH)" transform="rotate(103.8 2214.2 1447.6)"/>
<ellipse cx="2209.3" cy="1473.1" rx="15.6" ry="20.9" fill="url(#gH)" transform="rotate(96.4 2209.3 1473.1)"/>
<ellipse cx="2206.9" cy="1499.0" rx="15.6" ry="20.7" fill="url(#gH)" transform="rotate(94.2 2206.9 1499.0)"/>
<ellipse cx="2205.6" cy="1525.0" rx="15.6" ry="21.6" fill="url(#gH)" transform="rotate(90.7 2205.6 1525.0)"/>
<ellipse cx="2206.1" cy="1551.1" rx="15.6" ry="22.9" fill="url(#gH)" transform="rotate(88.0 2206.1 1551.1)"/>
<ellipse cx="2207.5" cy="1577.1" rx="15.6" ry="22.6" fill="url(#gH)" transform="rotate(87.2 2207.5 1577.1)"/>
<ellipse cx="2208.0" cy="1603.1" rx="15.6" ry="22.5" fill="url(#gH)" transform="rotate(90.3 2208.0 1603.1)"/>
<ellipse cx="2207.2" cy="1629.1" rx="15.6" ry="21.1" fill="url(#gH)" transform="rotate(93.7 2207.2 1629.1)"/>
<ellipse cx="2203.9" cy="1654.9" rx="15.6" ry="21.9" fill="url(#gH)" transform="rotate(101.6 2203.9 1654.9)"/>
<ellipse cx="2195.8" cy="1679.6" rx="15.6" ry="21.3" fill="url(#gH)" transform="rotate(117.2 2195.8 1679.6)"/>
<ellipse cx="2181.4" cy="1701.3" rx="15.6" ry="21.0" fill="url(#gH)" transform="rotate(126.5 2181.4 1701.3)"/>
<path d="M1986.4 1726.3 C1980.2 1730.5 1980.9 1739.7 1979.1 1746.8 C1977.2 1753.9 1976.4 1762.7 1975.3 1769.0 C1974.2 1775.3 1972.1 1779.5 1972.2 1784.8 C1972.3 1790.1 1975.8 1795.3 1975.9 1800.6 C1976.0 1805.9 1972.5 1811.8 1972.8 1816.5 C1973.1 1821.2 1976.3 1825.8 1977.8 1829.1 C1979.3 1832.4 1981.2 1832.9 1981.6 1836.1 C1982.0 1839.3 1979.7 1844.0 1980.1 1848.1 C1980.5 1852.2 1981.5 1857.3 1983.9 1860.8 C1986.3 1864.3 1990.2 1867.3 1994.3 1869.0 C1998.4 1870.7 2003.8 1871.2 2008.5 1870.9 C2013.2 1870.6 2019.1 1869.8 2022.8 1867.1 C2026.5 1864.3 2029.1 1858.6 2030.7 1854.4 C2032.3 1850.2 2032.6 1845.4 2032.3 1841.8 C2032.0 1838.2 2028.8 1837.1 2029.1 1832.9 C2029.4 1828.7 2032.9 1821.9 2033.9 1816.5 C2035.0 1811.1 2034.7 1805.9 2035.4 1800.6 C2036.1 1795.3 2036.9 1790.1 2038.0 1784.8 C2039.1 1779.5 2040.6 1774.8 2041.8 1769.0 C2043.0 1763.2 2045.2 1756.3 2044.9 1750.0 C2044.6 1743.7 2044.9 1735.8 2040.2 1731.0 C2035.5 1726.2 2025.5 1722.3 2016.5 1721.5 C2007.5 1720.7 1992.6 1722.1 1986.4 1726.3 Z" fill="url(#gRect)"/>
<path d="M1986.4 1726.3 C1980.2 1730.5 1980.9 1739.7 1979.1 1746.8 C1977.2 1753.9 1976.4 1762.7 1975.3 1769.0 C1974.2 1775.3 1972.1 1779.5 1972.2 1784.8 C1972.3 1790.1 1975.8 1795.3 1975.9 1800.6 C1976.0 1805.9 1972.5 1811.8 1972.8 1816.5 C1973.1 1821.2 1976.3 1825.8 1977.8 1829.1 C1979.3 1832.4 1981.2 1832.9 1981.6 1836.1 C1982.0 1839.3 1979.7 1844.0 1980.1 1848.1 C1980.5 1852.2 1981.5 1857.3 1983.9 1860.8 C1986.3 1864.3 1990.2 1867.3 1994.3 1869.0 C1998.4 1870.7 2003.8 1871.2 2008.5 1870.9 C2013.2 1870.6 2019.1 1869.8 2022.8 1867.1 C2026.5 1864.3 2029.1 1858.6 2030.7 1854.4 C2032.3 1850.2 2032.6 1845.4 2032.3 1841.8 C2032.0 1838.2 2028.8 1837.1 2029.1 1832.9 C2029.4 1828.7 2032.9 1821.9 2033.9 1816.5 C2035.0 1811.1 2034.7 1805.9 2035.4 1800.6 C2036.1 1795.3 2036.9 1790.1 2038.0 1784.8 C2039.1 1779.5 2040.6 1774.8 2041.8 1769.0 C2043.0 1763.2 2045.2 1756.3 2044.9 1750.0 C2044.6 1743.7 2044.9 1735.8 2040.2 1731.0 C2035.5 1726.2 2025.5 1722.3 2016.5 1721.5 C2007.5 1720.7 1992.6 1722.1 1986.4 1726.3 Z" fill="none" stroke="#c5664a" stroke-width="1.6" opacity="0.8"/>
<path d="M1994.3 1734.2 C1993.5 1740.0 1990.2 1757.9 1989.2 1769.0 C1988.2 1780.1 1987.9 1790.6 1988.0 1800.6 C1988.1 1810.6 1989.6 1824.3 1989.9 1829.1" fill="none" stroke="#cf7a5e" stroke-width="1.3" opacity="0.5"/>
<path d="M2003.8 1734.2 C2003.0 1740.0 1999.8 1757.9 1998.7 1769.0 C1997.7 1780.1 1997.4 1790.6 1997.5 1800.6 C1997.6 1810.6 1999.1 1824.3 1999.4 1829.1" fill="none" stroke="#cf7a5e" stroke-width="1.3" opacity="0.45"/>
<path d="M2014.9 1734.2 C2014.1 1740.0 2010.9 1757.9 2009.8 1769.0 C2008.7 1780.1 2008.4 1790.6 2008.5 1800.6 C2008.6 1810.6 2010.1 1824.3 2010.4 1829.1" fill="none" stroke="#cf7a5e" stroke-width="1.3" opacity="0.5"/>
<path d="M2024.4 1734.2 C2023.6 1740.0 2020.4 1757.9 2019.3 1769.0 C2018.2 1780.1 2017.9 1790.6 2018.0 1800.6 C2018.1 1810.6 2019.6 1824.3 2019.9 1829.1" fill="none" stroke="#cf7a5e" stroke-width="1.3" opacity="0.45"/>
<path d="M1978.5 1831.0 C1981.1 1831.7 1988.5 1834.6 1994.3 1835.4 C2000.1 1836.2 2007.4 1836.6 2013.3 1836.1 C2019.2 1835.6 2027.0 1832.9 2029.7 1832.3" fill="none" stroke="#c76a4e" stroke-width="2" opacity="0.8"/>
<path d="M1980.4 1848.1 C1983.2 1848.7 1991.5 1851.3 1997.5 1851.9 C2003.5 1852.5 2010.8 1852.6 2016.5 1851.9 C2022.2 1851.2 2029.1 1848.2 2031.6 1847.5" fill="none" stroke="#d07a5e" stroke-width="1.5" opacity="0.6"/>
<path d="M1973.4 1786.4 C1975.3 1787.7 1981.0 1792.7 1984.8 1794.3 C1988.5 1795.9 1994.1 1795.6 1995.9 1795.9" fill="none" stroke="#c76a4e" stroke-width="2" opacity="0.55" filter="url(#b1)"/>
<path d="M2037.3 1786.4 C2035.7 1788.0 2031.0 1793.8 2027.5 1795.9 C2024.0 1798.0 2018.3 1798.6 2016.5 1799.1" fill="none" stroke="#c76a4e" stroke-width="2" opacity="0.55" filter="url(#b1)"/>
<path d="M1984.8 1863.9 C1988.0 1863.1 1992.2 1873.2 1997.5 1875.0 C2002.8 1876.8 2011.2 1877.4 2016.5 1875.0 C2021.8 1872.6 2025.9 1860.0 2029.1 1860.8 C2032.2 1861.6 2043.8 1876.5 2035.4 1879.7 C2027.0 1882.9 1986.9 1882.3 1978.5 1879.7 C1970.1 1877.1 1981.6 1864.7 1984.8 1863.9 Z" fill="#fff" filter="url(#b3)" opacity="0.85"/>
<path d="M2182 1698 C2177.3 1701.5 2164.2 1712.8 2154 1719 C2143.8 1725.2 2132.2 1730.7 2121 1735 C2109.8 1739.3 2097.8 1743.3 2087 1745 C2076.2 1746.7 2064.8 1746.3 2056 1745 C2047.2 1743.7 2037.7 1738.3 2034 1737" fill="none" stroke="#d97f62" stroke-width="52.1" stroke-linecap="round"/>
<ellipse cx="2182.0" cy="1698.0" rx="20.8" ry="32.7" fill="url(#gH)" transform="rotate(142.9 2182.0 1698.0)"/>
<ellipse cx="2154.3" cy="1718.8" rx="20.8" ry="33.2" fill="url(#gH)" transform="rotate(148.4 2154.3 1718.8)"/>
<ellipse cx="2123.1" cy="1734.2" rx="20.8" ry="33.4" fill="url(#gH)" transform="rotate(158.2 2123.1 1734.2)"/>
<ellipse cx="2090.0" cy="1744.5" rx="20.8" ry="34.0" fill="url(#gH)" transform="rotate(169.4 2090.0 1744.5)"/>
<ellipse cx="2055.5" cy="1744.9" rx="20.8" ry="33.2" fill="url(#gH)" transform="rotate(-170.8 2055.5 1744.9)"/>
<path d="M1836 1437 C1839.3 1437.5 1848.8 1436.2 1856 1440 C1863.2 1443.8 1870.3 1453.3 1879 1460 C1887.7 1466.7 1897.5 1474.2 1908 1480 C1918.5 1485.8 1929.0 1491.2 1942 1495 C1955.0 1498.8 1971.0 1502.0 1986 1503 C2001.0 1504.0 2016.3 1503.2 2032 1501 C2047.7 1498.8 2065.7 1494.8 2080 1490 C2094.3 1485.2 2106.5 1478.3 2118 1472 C2129.5 1465.7 2139.5 1459.3 2149 1452 C2158.5 1444.7 2167.0 1435.5 2175 1428 C2183.0 1420.5 2193.3 1410.5 2197 1407" fill="none" stroke="#d97f62" stroke-width="43.7" stroke-linecap="round"/>
<ellipse cx="1836.0" cy="1437.0" rx="17.5" ry="26.2" fill="url(#gH)" transform="rotate(7.4 1836.0 1437.0)"/>
<ellipse cx="1863.0" cy="1445.2" rx="17.5" ry="27.2" fill="url(#gH)" transform="rotate(41.8 1863.0 1445.2)"/>
<ellipse cx="1884.8" cy="1464.4" rx="17.5" ry="26.6" fill="url(#gH)" transform="rotate(37.1 1884.8 1464.4)"/>
<ellipse cx="1909.0" cy="1480.5" rx="17.5" ry="27.4" fill="url(#gH)" transform="rotate(28.9 1909.0 1480.5)"/>
<ellipse cx="1935.3" cy="1492.8" rx="17.5" ry="27.4" fill="url(#gH)" transform="rotate(19.7 1935.3 1492.8)"/>
<ellipse cx="1963.5" cy="1500.1" rx="17.5" ry="25.6" fill="url(#gH)" transform="rotate(10.4 1963.5 1500.1)"/>
<ellipse cx="1992.4" cy="1503.3" rx="17.5" ry="25.5" fill="url(#gH)" transform="rotate(1.9 1992.4 1503.3)"/>
<ellipse cx="2021.5" cy="1502.3" rx="17.5" ry="28.1" fill="url(#gH)" transform="rotate(-5.8 2021.5 1502.3)"/>
<ellipse cx="2050.3" cy="1497.8" rx="17.5" ry="26.3" fill="url(#gH)" transform="rotate(-11.5 2050.3 1497.8)"/>
<ellipse cx="2078.4" cy="1490.5" rx="17.5" ry="26.2" fill="url(#gH)" transform="rotate(-18.1 2078.4 1490.5)"/>
<ellipse cx="2105.1" cy="1479.0" rx="17.5" ry="28.6" fill="url(#gH)" transform="rotate(-27.6 2105.1 1479.0)"/>
<ellipse cx="2130.5" cy="1464.7" rx="17.5" ry="26.9" fill="url(#gH)" transform="rotate(-31.7 2130.5 1464.7)"/>
<ellipse cx="2154.2" cy="1447.8" rx="17.5" ry="28.1" fill="url(#gH)" transform="rotate(-40.8 2154.2 1447.8)"/>
<ellipse cx="2175.3" cy="1427.7" rx="17.5" ry="27.0" fill="url(#gH)" transform="rotate(-43.2 2175.3 1427.7)"/>
<ellipse cx="2196.4" cy="1407.6" rx="17.5" ry="27.5" fill="url(#gH)" transform="rotate(-43.8 2196.4 1407.6)"/><path d="M1965.1 1279.4 C1973.4 1276.2 1980.0 1271.6 1988.9 1268.4 C1997.9 1265.2 2008.8 1263.5 2018.8 1260.5 C2028.8 1257.5 2038.7 1254.2 2048.6 1250.5 C2058.5 1246.8 2069.8 1241.9 2078.4 1238.6 C2087.0 1235.3 2092.0 1232.5 2100.3 1230.6 C2108.6 1228.7 2118.6 1227.6 2128.2 1227.2 C2137.8 1226.8 2150.1 1228.1 2158.0 1228.0 C2165.9 1227.9 2174.2 1226.3 2175.9 1226.6 C2177.6 1226.9 2172.6 1227.9 2168.0 1229.6 C2163.4 1231.3 2154.7 1233.8 2148.1 1236.6 C2141.5 1239.4 2134.8 1242.5 2128.2 1246.5 C2121.6 1250.5 2114.9 1255.5 2108.3 1260.5 C2101.7 1265.5 2095.0 1271.8 2088.4 1276.4 C2081.8 1281.0 2075.1 1284.3 2068.5 1288.3 C2061.9 1292.3 2054.6 1297.0 2048.6 1300.2 C2042.6 1303.4 2034.8 1304.4 2032.7 1307.2 C2030.6 1310.0 2036.4 1313.7 2035.7 1317.2 C2035.0 1320.7 2033.2 1324.3 2028.7 1328.1 C2024.2 1331.9 2015.4 1336.3 2008.8 1340.0 C2002.2 1343.7 1995.5 1347.5 1988.9 1350.0 C1982.3 1352.5 1975.6 1353.6 1969.0 1354.9 C1962.4 1356.2 1955.7 1356.1 1949.1 1357.9 C1942.5 1359.7 1935.8 1362.2 1929.2 1365.9 C1922.6 1369.6 1914.7 1374.8 1909.4 1379.8 C1904.1 1384.8 1903.4 1390.4 1897.4 1395.7 C1891.4 1401.0 1881.5 1406.9 1873.5 1411.6 C1865.5 1416.2 1857.0 1421.3 1849.7 1423.6 C1842.4 1425.9 1835.4 1426.4 1829.8 1425.6 C1824.2 1424.8 1817.2 1422.1 1815.9 1418.6 C1814.6 1415.1 1818.5 1410.7 1821.8 1404.7 C1825.1 1398.7 1831.1 1389.8 1835.8 1382.8 C1840.5 1375.8 1845.4 1368.2 1849.7 1362.9 C1854.0 1357.6 1857.3 1358.3 1861.6 1351.0 C1865.9 1343.7 1870.8 1325.7 1875.5 1319.1 C1880.2 1312.5 1883.8 1314.8 1889.5 1311.2 C1895.2 1307.6 1901.1 1301.3 1909.4 1297.3 C1917.7 1293.3 1929.9 1290.3 1939.2 1287.3 C1948.5 1284.3 1956.8 1282.6 1965.1 1279.4 Z" fill="#8b2c33" />
<path d="M1893.4 1319.1 C1901.0 1310.5 1916.6 1310.5 1929.2 1307.2 C1941.8 1303.9 1955.7 1301.2 1969.0 1299.2 C1982.3 1297.2 1998.8 1294.0 2008.8 1295.3 C2018.8 1296.6 2026.0 1302.6 2028.7 1307.2 C2031.4 1311.8 2029.7 1318.1 2024.7 1323.1 C2019.7 1328.1 2008.8 1333.3 1998.9 1337.0 C1989.0 1340.7 1976.7 1342.7 1965.1 1345.0 C1953.5 1347.3 1939.8 1347.3 1929.2 1351.0 C1918.6 1354.7 1909.0 1365.6 1901.4 1366.9 C1893.8 1368.2 1884.8 1366.9 1883.5 1358.9 C1882.2 1350.9 1885.8 1327.7 1893.4 1319.1 Z" fill="#9a3238" filter="url(#b5)" opacity="0.9"/>
<path d="M1829.8 1416.6 C1829.1 1411.6 1842.4 1397.8 1849.7 1388.8 C1857.0 1379.8 1866.2 1367.6 1873.5 1362.9 C1880.8 1358.2 1888.8 1358.2 1893.4 1360.9 C1898.1 1363.6 1903.4 1371.8 1901.4 1378.8 C1899.4 1385.8 1889.5 1396.1 1881.5 1402.7 C1873.5 1409.3 1862.3 1416.3 1853.7 1418.6 C1845.1 1420.9 1830.5 1421.6 1829.8 1416.6 Z" fill="#98313a" filter="url(#b5)" opacity="0.9"/>
<path d="M2038.7 1263.4 C2046.7 1256.4 2071.8 1250.8 2088.4 1245.5 C2105.0 1240.2 2125.5 1234.2 2138.1 1231.6 C2150.7 1228.9 2165.7 1226.9 2164.0 1229.6 C2162.3 1232.2 2140.8 1240.2 2128.2 1247.5 C2115.6 1254.8 2100.7 1265.4 2088.4 1273.4 C2076.1 1281.4 2062.6 1293.0 2054.6 1295.3 C2046.6 1297.6 2043.2 1292.6 2040.6 1287.3 C2037.9 1282.0 2030.7 1270.4 2038.7 1263.4 Z" fill="#96363a" filter="url(#b3)" opacity="0.9"/>
<path d="M1802.3 1299.2 C1802.2 1287.9 1801.0 1281.3 1801.9 1271.4 C1802.8 1261.5 1804.9 1249.2 1807.9 1239.6 C1810.9 1230.0 1814.5 1221.7 1819.8 1213.7 C1825.1 1205.7 1831.4 1197.8 1839.7 1191.8 C1848.0 1185.8 1859.3 1181.1 1869.6 1177.9 C1879.9 1174.8 1890.8 1173.5 1901.4 1172.9 C1912.0 1172.3 1923.2 1173.1 1933.2 1174.3 C1943.2 1175.5 1953.8 1178.1 1961.1 1179.9 C1968.4 1181.7 1970.7 1183.6 1977.0 1184.9 C1983.3 1186.2 1990.3 1186.7 1998.9 1187.8 C2007.5 1188.9 2017.1 1190.1 2028.7 1191.8 C2040.3 1193.5 2055.2 1196.0 2068.5 1197.8 C2081.8 1199.6 2095.0 1200.8 2108.3 1202.8 C2121.6 1204.8 2137.5 1207.5 2148.1 1209.7 C2158.7 1211.9 2166.4 1213.9 2171.9 1215.7 C2177.4 1217.5 2180.2 1218.9 2180.9 1220.7 C2181.6 1222.5 2179.7 1225.4 2175.9 1226.6 C2172.1 1227.8 2165.9 1227.9 2158.0 1228.0 C2150.1 1228.1 2137.8 1226.8 2128.2 1227.2 C2118.6 1227.6 2108.6 1228.7 2100.3 1230.6 C2092.0 1232.5 2087.0 1235.3 2078.4 1238.6 C2069.8 1241.9 2058.5 1246.8 2048.6 1250.5 C2038.7 1254.2 2028.8 1257.5 2018.8 1260.5 C2008.8 1263.5 1997.9 1265.2 1988.9 1268.4 C1980.0 1271.6 1973.4 1276.2 1965.1 1279.4 C1956.8 1282.6 1948.5 1284.3 1939.2 1287.3 C1929.9 1290.3 1917.7 1293.3 1909.4 1297.3 C1901.1 1301.3 1895.2 1307.6 1889.5 1311.2 C1883.8 1314.8 1880.2 1312.5 1875.5 1319.1 C1870.8 1325.7 1865.9 1343.7 1861.6 1351.0 C1857.3 1358.3 1854.0 1357.6 1849.7 1362.9 C1845.4 1368.2 1840.5 1375.8 1835.8 1382.8 C1831.1 1389.8 1825.1 1398.7 1821.8 1404.7 C1818.5 1410.7 1818.1 1416.9 1815.9 1418.6 C1813.8 1420.2 1810.7 1421.2 1808.9 1414.6 C1807.1 1408.0 1806.0 1391.4 1804.9 1378.8 C1803.8 1366.2 1802.7 1352.3 1802.3 1339.0 C1801.9 1325.7 1802.4 1310.5 1802.3 1299.2 Z" fill="#c35140" />
<g clip-path="url(#cLiverL)">
<path d="M1802.3 1299.2 C1802.2 1287.9 1801.0 1281.3 1801.9 1271.4 C1802.8 1261.5 1804.9 1249.2 1807.9 1239.6 C1810.9 1230.0 1814.5 1221.7 1819.8 1213.7 C1825.1 1205.7 1831.4 1197.8 1839.7 1191.8 C1848.0 1185.8 1859.3 1181.1 1869.6 1177.9 C1879.9 1174.8 1890.8 1173.5 1901.4 1172.9 C1912.0 1172.3 1923.2 1173.1 1933.2 1174.3 C1943.2 1175.5 1953.8 1178.1 1961.1 1179.9 C1968.4 1181.7 1970.7 1183.6 1977.0 1184.9 C1983.3 1186.2 1990.3 1186.7 1998.9 1187.8 C2007.5 1188.9 2017.1 1190.1 2028.7 1191.8 C2040.3 1193.5 2055.2 1196.0 2068.5 1197.8 C2081.8 1199.6 2095.0 1200.8 2108.3 1202.8 C2121.6 1204.8 2137.5 1207.5 2148.1 1209.7 C2158.7 1211.9 2166.4 1213.9 2171.9 1215.7 C2177.4 1217.5 2180.2 1218.9 2180.9 1220.7 C2181.6 1222.5 2179.7 1225.4 2175.9 1226.6 C2172.1 1227.8 2165.9 1227.9 2158.0 1228.0 C2150.1 1228.1 2137.8 1226.8 2128.2 1227.2 C2118.6 1227.6 2108.6 1228.7 2100.3 1230.6 C2092.0 1232.5 2087.0 1235.3 2078.4 1238.6 C2069.8 1241.9 2058.5 1246.8 2048.6 1250.5 C2038.7 1254.2 2028.8 1257.5 2018.8 1260.5 C2008.8 1263.5 1997.9 1265.2 1988.9 1268.4 C1980.0 1271.6 1973.4 1276.2 1965.1 1279.4 C1956.8 1282.6 1948.5 1284.3 1939.2 1287.3 C1929.9 1290.3 1917.7 1293.3 1909.4 1297.3 C1901.1 1301.3 1895.2 1307.6 1889.5 1311.2 C1883.8 1314.8 1880.2 1312.5 1875.5 1319.1 C1870.8 1325.7 1865.9 1343.7 1861.6 1351.0 C1857.3 1358.3 1854.0 1357.6 1849.7 1362.9 C1845.4 1368.2 1840.5 1375.8 1835.8 1382.8 C1831.1 1389.8 1825.1 1398.7 1821.8 1404.7 C1818.5 1410.7 1818.1 1416.9 1815.9 1418.6 C1813.8 1420.2 1810.7 1421.2 1808.9 1414.6 C1807.1 1408.0 1806.0 1391.4 1804.9 1378.8 C1803.8 1366.2 1802.7 1352.3 1802.3 1339.0 C1801.9 1325.7 1802.4 1310.5 1802.3 1299.2 Z" fill="none" stroke="#a03a34" stroke-width="18" filter="url(#b5)" opacity="0.85"/>
<ellipse cx="1893.4" cy="1225.6" rx="70" ry="42" fill="#ea8c72" filter="url(#b20)" opacity="0.95" transform="rotate(-25 1893.4 1225.6)"/>
<ellipse cx="2038.7" cy="1219.7" rx="70" ry="18" fill="#cf6a5c" filter="url(#b8)" opacity="0.8" transform="rotate(12 2038.7 1219.7)"/>
<path d="M2012.8 1185.9 L2040.6 1189.8 L2100.3 1253.5 L2076.5 1271.4Z" fill="#d98a78" filter="url(#b3)" opacity="0.35"/>
<path d="M1875.5 1321.1 C1873.2 1326.1 1865.9 1344.0 1861.6 1351.0 C1857.3 1358.0 1854.0 1357.6 1849.7 1362.9 C1845.4 1368.2 1840.5 1375.8 1835.8 1382.8 C1831.1 1389.8 1825.2 1398.9 1821.8 1404.7 C1818.4 1410.5 1816.5 1415.6 1815.5 1417.8" fill="none" stroke="#d67868" stroke-width="4" filter="url(#b1)" opacity="0.9"/>
</g>
<path d="M1976.6 1184.3 C1978.5 1175.3 1981.5 1176.3 1981.4 1185.5 C1981.3 1194.7 1977.3 1225.4 1976.0 1239.6 C1974.7 1253.8 1975.2 1264.0 1973.4 1270.6 C1971.6 1277.2 1967.5 1277.9 1965.1 1279.4 C1962.7 1280.9 1958.3 1286.0 1959.1 1279.4 C1959.9 1272.8 1967.1 1255.4 1970.0 1239.6 C1972.9 1223.8 1974.7 1193.3 1976.6 1184.3 Z" fill="#cf7f70" opacity="0.45"/>
<path d="M1977.0 1184.9 C1975.8 1194.0 1973.0 1223.8 1970.0 1239.6 C1967.0 1255.3 1960.9 1272.8 1959.1 1279.4" fill="none" stroke="#e3a392" stroke-width="1.8" opacity="0.75"/>
<path d="M1981.0 1185.9 C1980.1 1194.9 1976.7 1225.5 1975.4 1239.6 C1974.1 1253.7 1973.7 1265.4 1973.4 1270.6" fill="none" stroke="#e3a392" stroke-width="1.4" opacity="0.6"/>
<path d="M2175.9 1335.1 C2177.2 1331.8 2182.6 1328.4 2185.9 1329.1 C2189.2 1329.8 2193.4 1334.0 2195.8 1339.0 C2198.2 1344.0 2200.1 1352.3 2200.2 1358.9 C2200.3 1365.5 2198.5 1373.4 2196.2 1378.8 C2193.9 1384.2 2189.5 1389.2 2186.3 1391.2 C2183.1 1393.2 2178.6 1394.5 2176.9 1390.8 C2175.2 1387.1 2175.7 1375.9 2175.9 1368.9 C2176.1 1361.9 2177.9 1354.6 2177.9 1349.0 C2177.9 1343.4 2174.6 1338.4 2175.9 1335.1 Z" fill="#7d2d86" />
<path d="M2184.9 1339.0 C2186.1 1342.3 2191.6 1351.6 2191.8 1358.9 C2192.0 1366.2 2186.9 1378.8 2185.9 1382.8" fill="none" stroke="#a050a8" stroke-width="5" filter="url(#b2)" opacity="0.8"/>
<path d="M1937.2 1414.6 C1938.2 1409.9 1941.6 1408.0 1945.2 1404.7 C1948.8 1401.4 1951.8 1398.2 1959.1 1394.7 C1966.4 1391.2 1977.3 1386.5 1988.9 1383.8 C2000.5 1381.1 2015.4 1380.0 2028.7 1378.8 C2042.0 1377.6 2055.2 1377.5 2068.5 1376.8 C2081.8 1376.1 2095.0 1376.4 2108.3 1374.8 C2121.6 1373.2 2136.5 1370.2 2148.1 1366.9 C2159.7 1363.6 2171.5 1354.2 2177.9 1354.9 C2184.3 1355.6 2185.9 1364.9 2186.3 1370.9 C2186.7 1376.9 2183.4 1384.8 2180.3 1390.8 C2177.2 1396.8 2173.4 1402.1 2168.0 1406.7 C2162.6 1411.3 2156.4 1415.1 2148.1 1418.6 C2139.8 1422.1 2128.1 1425.5 2118.2 1427.6 C2108.2 1429.6 2098.3 1430.2 2088.4 1430.9 C2078.5 1431.6 2068.4 1431.1 2058.5 1431.7 C2048.6 1432.3 2037.0 1433.0 2028.7 1434.5 C2020.4 1436.0 2013.0 1438.1 2008.8 1440.5 C2004.5 1442.9 2004.8 1445.8 2003.2 1448.8 C2001.6 1451.8 2001.3 1455.9 1998.9 1458.4 C1996.5 1460.9 1995.2 1464.0 1988.9 1464.0 C1982.6 1464.0 1968.0 1461.2 1961.1 1458.4 C1954.1 1455.6 1950.8 1451.2 1947.2 1446.9 C1943.6 1442.7 1940.9 1438.3 1939.2 1432.9 C1937.5 1427.5 1936.2 1419.3 1937.2 1414.6 Z" fill="#dc9a3e" stroke="#c98432" stroke-width="1.5"/>
<path d="M1937.2 1414.6 C1938.2 1409.9 1941.6 1408.0 1945.2 1404.7 C1948.8 1401.4 1951.8 1398.2 1959.1 1394.7 C1966.4 1391.2 1977.3 1386.5 1988.9 1383.8 C2000.5 1381.1 2015.4 1380.0 2028.7 1378.8 C2042.0 1377.6 2055.2 1377.5 2068.5 1376.8 C2081.8 1376.1 2095.0 1376.4 2108.3 1374.8 C2121.6 1373.2 2136.5 1370.2 2148.1 1366.9 C2159.7 1363.6 2171.5 1354.2 2177.9 1354.9 C2184.3 1355.6 2185.9 1364.9 2186.3 1370.9 C2186.7 1376.9 2183.4 1384.8 2180.3 1390.8 C2177.2 1396.8 2173.4 1402.1 2168.0 1406.7 C2162.6 1411.3 2156.4 1415.1 2148.1 1418.6 C2139.8 1422.1 2128.1 1425.5 2118.2 1427.6 C2108.2 1429.6 2098.3 1430.2 2088.4 1430.9 C2078.5 1431.6 2068.4 1431.1 2058.5 1431.7 C2048.6 1432.3 2037.0 1433.0 2028.7 1434.5 C2020.4 1436.0 2013.0 1438.1 2008.8 1440.5 C2004.5 1442.9 2004.8 1445.8 2003.2 1448.8 C2001.6 1451.8 2001.3 1455.9 1998.9 1458.4 C1996.5 1460.9 1995.2 1464.0 1988.9 1464.0 C1982.6 1464.0 1968.0 1461.2 1961.1 1458.4 C1954.1 1455.6 1950.8 1451.2 1947.2 1446.9 C1943.6 1442.7 1940.9 1438.3 1939.2 1432.9 C1937.5 1427.5 1936.2 1419.3 1937.2 1414.6 Z" fill="#000" filter="url(#pancTex)" opacity="0.6"/>
<path d="M2162.0 1229.6 C2168.6 1230.6 2175.3 1235.3 2179.9 1239.6 C2184.5 1243.9 2187.4 1248.9 2189.8 1255.5 C2192.2 1262.1 2193.5 1270.5 2194.2 1279.4 C2194.9 1288.4 2194.5 1299.3 2193.8 1309.2 C2193.1 1319.1 2192.1 1329.0 2189.8 1339.0 C2187.5 1349.0 2184.2 1359.6 2179.9 1368.9 C2175.6 1378.2 2171.0 1387.4 2164.0 1394.7 C2157.0 1402.0 2147.4 1408.4 2138.1 1412.6 C2128.8 1416.8 2119.9 1418.4 2108.3 1419.6 C2096.7 1420.8 2080.1 1420.3 2068.5 1419.6 C2056.9 1418.9 2047.7 1417.8 2038.7 1415.6 C2029.8 1413.4 2022.4 1410.2 2014.8 1406.7 C2007.2 1403.2 1999.5 1398.2 1992.9 1394.7 C1986.3 1391.2 1980.3 1387.3 1975.0 1385.8 C1969.7 1384.3 1965.4 1384.8 1961.1 1385.8 C1956.8 1386.8 1952.3 1388.5 1949.1 1391.7 C1945.8 1394.9 1943.5 1400.6 1941.6 1404.7 C1939.7 1408.8 1939.7 1412.9 1937.6 1416.6 C1935.5 1420.2 1933.2 1424.5 1929.2 1426.6 C1925.2 1428.6 1918.3 1429.5 1913.3 1428.9 C1908.3 1428.3 1902.7 1426.4 1899.4 1423.0 C1896.1 1419.6 1893.7 1413.8 1893.4 1408.7 C1893.1 1403.7 1894.7 1398.0 1897.4 1392.7 C1900.1 1387.4 1904.1 1381.4 1909.4 1376.8 C1914.7 1372.2 1922.6 1367.9 1929.2 1364.9 C1935.8 1361.9 1942.5 1360.4 1949.1 1358.9 C1955.7 1357.4 1962.4 1356.4 1969.0 1355.9 C1975.6 1355.4 1982.3 1355.9 1988.9 1355.9 C1995.5 1355.9 2002.2 1356.2 2008.8 1355.9 C2015.4 1355.6 2022.1 1355.2 2028.7 1354.0 C2035.3 1352.8 2042.6 1351.5 2048.6 1349.0 C2054.6 1346.5 2060.5 1343.0 2064.5 1339.0 C2068.5 1335.0 2070.8 1330.4 2072.5 1325.1 C2074.2 1319.8 2073.8 1313.2 2074.5 1307.2 C2075.2 1301.2 2074.8 1294.3 2076.5 1289.3 C2078.2 1284.3 2080.4 1282.4 2084.4 1277.4 C2088.4 1272.4 2094.7 1265.2 2100.3 1259.5 C2105.9 1253.8 2111.6 1247.8 2118.2 1243.5 C2124.8 1239.2 2132.8 1235.9 2140.1 1233.6 C2147.4 1231.3 2155.4 1228.6 2162.0 1229.6 Z" fill="#efae95" />
<g clip-path="url(#cStom)">
<path d="M2162.0 1229.6 C2168.6 1230.6 2175.3 1235.3 2179.9 1239.6 C2184.5 1243.9 2187.4 1248.9 2189.8 1255.5 C2192.2 1262.1 2193.5 1270.5 2194.2 1279.4 C2194.9 1288.4 2194.5 1299.3 2193.8 1309.2 C2193.1 1319.1 2192.1 1329.0 2189.8 1339.0 C2187.5 1349.0 2184.2 1359.6 2179.9 1368.9 C2175.6 1378.2 2171.0 1387.4 2164.0 1394.7 C2157.0 1402.0 2147.4 1408.4 2138.1 1412.6 C2128.8 1416.8 2119.9 1418.4 2108.3 1419.6 C2096.7 1420.8 2080.1 1420.3 2068.5 1419.6 C2056.9 1418.9 2047.7 1417.8 2038.7 1415.6 C2029.8 1413.4 2022.4 1410.2 2014.8 1406.7 C2007.2 1403.2 1999.5 1398.2 1992.9 1394.7 C1986.3 1391.2 1980.3 1387.3 1975.0 1385.8 C1969.7 1384.3 1965.4 1384.8 1961.1 1385.8 C1956.8 1386.8 1952.3 1388.5 1949.1 1391.7 C1945.8 1394.9 1943.5 1400.6 1941.6 1404.7 C1939.7 1408.8 1939.7 1412.9 1937.6 1416.6 C1935.5 1420.2 1933.2 1424.5 1929.2 1426.6 C1925.2 1428.6 1918.3 1429.5 1913.3 1428.9 C1908.3 1428.3 1902.7 1426.4 1899.4 1423.0 C1896.1 1419.6 1893.7 1413.8 1893.4 1408.7 C1893.1 1403.7 1894.7 1398.0 1897.4 1392.7 C1900.1 1387.4 1904.1 1381.4 1909.4 1376.8 C1914.7 1372.2 1922.6 1367.9 1929.2 1364.9 C1935.8 1361.9 1942.5 1360.4 1949.1 1358.9 C1955.7 1357.4 1962.4 1356.4 1969.0 1355.9 C1975.6 1355.4 1982.3 1355.9 1988.9 1355.9 C1995.5 1355.9 2002.2 1356.2 2008.8 1355.9 C2015.4 1355.6 2022.1 1355.2 2028.7 1354.0 C2035.3 1352.8 2042.6 1351.5 2048.6 1349.0 C2054.6 1346.5 2060.5 1343.0 2064.5 1339.0 C2068.5 1335.0 2070.8 1330.4 2072.5 1325.1 C2074.2 1319.8 2073.8 1313.2 2074.5 1307.2 C2075.2 1301.2 2074.8 1294.3 2076.5 1289.3 C2078.2 1284.3 2080.4 1282.4 2084.4 1277.4 C2088.4 1272.4 2094.7 1265.2 2100.3 1259.5 C2105.9 1253.8 2111.6 1247.8 2118.2 1243.5 C2124.8 1239.2 2132.8 1235.9 2140.1 1233.6 C2147.4 1231.3 2155.4 1228.6 2162.0 1229.6 Z" fill="none" stroke="#d98469" stroke-width="22" filter="url(#b5)" opacity="0.8"/>
<path d="M2148.1 1255.5 C2149.4 1261.1 2156.0 1277.0 2156.0 1289.3 C2156.0 1301.6 2154.4 1316.8 2148.1 1329.1 C2141.8 1341.4 2129.8 1355.0 2118.2 1362.9 C2106.6 1370.9 2085.0 1374.5 2078.4 1376.8" fill="none" stroke="#fbdccd" stroke-width="42" stroke-linecap="round" filter="url(#b12)" opacity="0.9"/>
<path d="M1913.3 1388.8 C1916.0 1386.8 1921.6 1380.1 1929.2 1376.8 C1936.8 1373.5 1949.1 1370.6 1959.1 1368.9 C1969.0 1367.2 1983.9 1367.2 1988.9 1366.9" fill="none" stroke="#f8cdb9" stroke-width="20" stroke-linecap="round" filter="url(#b8)" opacity="0.85"/>
<path d="M1937.2 1414.6 C1938.2 1409.9 1941.6 1408.0 1945.2 1404.7 C1948.8 1401.4 1951.8 1398.2 1959.1 1394.7 C1966.4 1391.2 1977.3 1386.5 1988.9 1383.8 C2000.5 1381.1 2015.4 1380.0 2028.7 1378.8 C2042.0 1377.6 2055.2 1377.5 2068.5 1376.8 C2081.8 1376.1 2095.0 1376.4 2108.3 1374.8 C2121.6 1373.2 2136.5 1370.2 2148.1 1366.9 C2159.7 1363.6 2171.5 1354.2 2177.9 1354.9 C2184.3 1355.6 2185.9 1364.9 2186.3 1370.9 C2186.7 1376.9 2183.4 1384.8 2180.3 1390.8 C2177.2 1396.8 2173.4 1402.1 2168.0 1406.7 C2162.6 1411.3 2156.4 1415.1 2148.1 1418.6 C2139.8 1422.1 2128.1 1425.5 2118.2 1427.6 C2108.2 1429.6 2098.3 1430.2 2088.4 1430.9 C2078.5 1431.6 2068.4 1431.1 2058.5 1431.7 C2048.6 1432.3 2037.0 1433.0 2028.7 1434.5 C2020.4 1436.0 2013.0 1438.1 2008.8 1440.5 C2004.5 1442.9 2004.8 1445.8 2003.2 1448.8 C2001.6 1451.8 2001.3 1455.9 1998.9 1458.4 C1996.5 1460.9 1995.2 1464.0 1988.9 1464.0 C1982.6 1464.0 1968.0 1461.2 1961.1 1458.4 C1954.1 1455.6 1950.8 1451.2 1947.2 1446.9 C1943.6 1442.7 1940.9 1438.3 1939.2 1432.9 C1937.5 1427.5 1936.2 1419.3 1937.2 1414.6 Z" fill="#e2965a" opacity="0.5"/>
<path d="M1937.2 1414.6 C1938.2 1409.9 1941.6 1408.0 1945.2 1404.7 C1948.8 1401.4 1951.8 1398.2 1959.1 1394.7 C1966.4 1391.2 1977.3 1386.5 1988.9 1383.8 C2000.5 1381.1 2015.4 1380.0 2028.7 1378.8 C2042.0 1377.6 2055.2 1377.5 2068.5 1376.8 C2081.8 1376.1 2095.0 1376.4 2108.3 1374.8 C2121.6 1373.2 2136.5 1370.2 2148.1 1366.9 C2159.7 1363.6 2171.5 1354.2 2177.9 1354.9 C2184.3 1355.6 2185.9 1364.9 2186.3 1370.9 C2186.7 1376.9 2183.4 1384.8 2180.3 1390.8 C2177.2 1396.8 2173.4 1402.1 2168.0 1406.7 C2162.6 1411.3 2156.4 1415.1 2148.1 1418.6 C2139.8 1422.1 2128.1 1425.5 2118.2 1427.6 C2108.2 1429.6 2098.3 1430.2 2088.4 1430.9 C2078.5 1431.6 2068.4 1431.1 2058.5 1431.7 C2048.6 1432.3 2037.0 1433.0 2028.7 1434.5 C2020.4 1436.0 2013.0 1438.1 2008.8 1440.5 C2004.5 1442.9 2004.8 1445.8 2003.2 1448.8 C2001.6 1451.8 2001.3 1455.9 1998.9 1458.4 C1996.5 1460.9 1995.2 1464.0 1988.9 1464.0 C1982.6 1464.0 1968.0 1461.2 1961.1 1458.4 C1954.1 1455.6 1950.8 1451.2 1947.2 1446.9 C1943.6 1442.7 1940.9 1438.3 1939.2 1432.9 C1937.5 1427.5 1936.2 1419.3 1937.2 1414.6 Z" fill="#000" filter="url(#pancTex)" opacity="0.14"/>
</g>
<path d="M1965.1 1358.9 C1964.4 1360.9 1960.4 1366.6 1961.1 1370.9 C1961.8 1375.2 1967.7 1382.5 1969.0 1384.8" fill="none" stroke="#d98a70" stroke-width="3" filter="url(#b1)" opacity="0.8"/>
<path d="M1945.2 1323.1 C1947.5 1323.8 1955.0 1324.4 1959.1 1327.1 C1963.2 1329.8 1967.2 1335.2 1970.0 1339.0 C1972.8 1342.8 1974.4 1347.2 1976.0 1350.0 C1977.6 1352.8 1978.8 1354.9 1979.4 1355.9" fill="none" stroke="#128042" stroke-width="4.6" stroke-linecap="round"/>
<path d="M1978.6 1355.9 C1979.2 1353.1 1980.6 1344.5 1982.0 1339.0 C1983.4 1333.5 1985.0 1327.7 1986.9 1323.1 C1988.8 1318.5 1992.2 1313.2 1993.3 1311.2" fill="none" stroke="#128042" stroke-width="4.6" stroke-linecap="round"/>
<path d="M1945.2 1322.7 C1947.5 1323.3 1955.0 1323.7 1959.1 1326.3 C1963.2 1328.9 1967.8 1336.2 1969.6 1338.2" fill="none" stroke="#3fbf6a" stroke-width="2" stroke-linecap="round"/>
<path d="M1862.0 1335.1 C1861.8 1330.4 1863.0 1324.7 1865.6 1321.1 C1868.2 1317.5 1872.9 1314.9 1877.5 1313.6 C1882.1 1312.3 1888.4 1312.6 1893.4 1313.2 C1898.4 1313.8 1903.1 1317.0 1907.4 1317.2 C1911.7 1317.4 1915.0 1314.2 1919.3 1314.2 C1923.6 1314.2 1928.5 1315.9 1933.2 1317.2 C1937.9 1318.5 1945.2 1320.1 1947.2 1322.1 C1949.2 1324.1 1947.5 1326.3 1945.2 1329.1 C1942.9 1331.9 1937.5 1336.2 1933.2 1339.0 C1928.9 1341.8 1923.6 1344.0 1919.3 1346.0 C1915.0 1348.0 1911.7 1349.3 1907.4 1351.0 C1903.1 1352.7 1898.4 1355.2 1893.4 1355.9 C1888.4 1356.6 1882.0 1356.5 1877.5 1355.3 C1873.0 1354.1 1869.2 1352.4 1866.6 1349.0 C1864.0 1345.6 1862.2 1339.8 1862.0 1335.1 Z" fill="#159049" stroke="#0c6634" stroke-width="1.5"/>
<ellipse cx="1883.5" cy="1335.1" rx="20" ry="19" fill="url(#gGall)"/>
<ellipse cx="1919.3" cy="1329.1" rx="15" ry="14" fill="url(#gGall)" opacity="0.9"/></g>
<g id="labels"><text x="1507" y="696" font-family="'Liberation Sans', sans-serif" font-size="25" font-weight="700" fill="#111" textLength="224.5" lengthAdjust="spacingAndGlyphs" >Mouth (oral cavity)</text>
<path d="M1738 688.7 L1925.6 688.7" fill="none" stroke="#1c1c1c" stroke-width="2.3" stroke-linejoin="miter"/>
<text x="1507" y="754.6" font-family="'Liberation Sans', sans-serif" font-size="25" font-weight="700" fill="#111" textLength="99" lengthAdjust="spacingAndGlyphs" >Tongue*</text>
<path d="M1612 747.6 L1795.8 747.6 L1897 711.8" fill="none" stroke="#1c1c1c" stroke-width="2.3" stroke-linejoin="miter"/>
<text x="1319.6" y="1039.7" font-family="'Liberation Sans', sans-serif" font-size="25" font-weight="700" fill="#111" textLength="135.5" lengthAdjust="spacingAndGlyphs" >Esophagus</text>
<path d="M1462 1031.7 L2013.5 1031.7" fill="none" stroke="#1c1c1c" stroke-width="2.3" stroke-linejoin="miter"/>
<text x="1319.6" y="1269" font-family="'Liberation Sans', sans-serif" font-size="25" font-weight="700" fill="#111" textLength="70" lengthAdjust="spacingAndGlyphs" >Liver*</text>
<path d="M1396 1262 L1864.6 1262" fill="none" stroke="#1c1c1c" stroke-width="2.3" stroke-linejoin="miter"/>
<text x="1319.6" y="1342" font-family="'Liberation Sans', sans-serif" font-size="25" font-weight="700" fill="#111" textLength="149" lengthAdjust="spacingAndGlyphs" >Gallbladder*</text>
<path d="M1474.6 1335 L1872.5 1335" fill="none" stroke="#1c1c1c" stroke-width="2.3" stroke-linejoin="miter"/>
<text x="1320.6" y="1554.6" font-family="'Liberation Sans', sans-serif" font-size="25" font-weight="700" fill="#111" textLength="178" lengthAdjust="spacingAndGlyphs" >Small intestine</text>
<path d="M1504.8 1548.2 L1549 1548.2" fill="none" stroke="#1c1c1c" stroke-width="2.3" stroke-linejoin="miter"/>
<path d="M1568.6 1481.6 L1549 1481.6 L1549 1615.4 L1568.6 1615.4" fill="none" stroke="#1c1c1c" stroke-width="2.5" stroke-linejoin="miter"/>
<text x="1574.6" y="1509.4" font-family="'Liberation Sans', sans-serif" font-size="25" font-weight="400" fill="#1c1c1c" textLength="123.5" lengthAdjust="spacingAndGlyphs" >Duodenum</text>
<path d="M1703.7 1499.7 L1741 1499.7 L1911.4 1407" fill="none" stroke="#1c1c1c" stroke-width="2.3" stroke-linejoin="miter"/>
<text x="1574.6" y="1557.4" font-family="'Liberation Sans', sans-serif" font-size="25" font-weight="400" fill="#1c1c1c" textLength="95" lengthAdjust="spacingAndGlyphs" >Jejunum</text>
<path d="M1675.4 1548.2 L2132 1548.2" fill="none" stroke="#1c1c1c" stroke-width="2.3" stroke-linejoin="miter"/>
<text x="1576.6" y="1605" font-family="'Liberation Sans', sans-serif" font-size="25" font-weight="400" fill="#1c1c1c" textLength="59" lengthAdjust="spacingAndGlyphs" >Ileum</text>
<path d="M1641.8 1596.2 L1741 1596.2 L1927.8 1652.8" fill="none" stroke="#1c1c1c" stroke-width="2.3" stroke-linejoin="miter"/>
<text x="1324.6" y="1877.8" font-family="'Liberation Sans', sans-serif" font-size="25" font-weight="400" fill="#1c1c1c" textLength="56" lengthAdjust="spacingAndGlyphs" >Anus</text>
<path d="M1388.8 1868.7 L1994.3 1868.7" fill="none" stroke="#1c1c1c" stroke-width="2.3" stroke-linejoin="miter"/>
<text x="2297.5" y="691.5" font-family="'Liberation Sans', sans-serif" font-size="25" font-weight="400" fill="#1c1c1c" textLength="147.5" lengthAdjust="spacingAndGlyphs" >Parotid gland</text>
<path d="M2021.8 681.8 L2291.5 681.8" fill="none" stroke="#1c1c1c" stroke-width="2.3" stroke-linejoin="miter"/>
<text x="2297.5" y="739" font-family="'Liberation Sans', sans-serif" font-size="25" font-weight="400" fill="#1c1c1c" textLength="186.5" lengthAdjust="spacingAndGlyphs" >Sublingual gland</text>
<path d="M1923 744.4 L2014.8 729.7 L2291.5 729.7" fill="none" stroke="#1c1c1c" stroke-width="2.3" stroke-linejoin="miter"/>
<text x="2297.5" y="783.8" font-family="'Liberation Sans', sans-serif" font-size="25" font-weight="400" fill="#1c1c1c" textLength="169.5" lengthAdjust="spacingAndGlyphs" >Submandibular</text>
<path d="M1981.6 774.6 L2291.5 774.6" fill="none" stroke="#1c1c1c" stroke-width="2.3" stroke-linejoin="miter"/>
<text x="2297.5" y="812.2" font-family="'Liberation Sans', sans-serif" font-size="25" font-weight="400" fill="#1c1c1c" textLength="60" lengthAdjust="spacingAndGlyphs" >gland</text>
<path d="M2495 669.8 L2514.8 669.8 L2514.8 821 L2495 821" fill="none" stroke="#1c1c1c" stroke-width="2.5" stroke-linejoin="miter"/>
<path d="M2514.8 745.6 L2535 745.6" fill="none" stroke="#1c1c1c" stroke-width="2.5" stroke-linejoin="miter"/>
<text x="2540.5" y="755.3" font-family="'Liberation Sans', sans-serif" font-size="25" font-weight="700" fill="#111" textLength="196" lengthAdjust="spacingAndGlyphs" >Salivary glands*</text>
<path d="M2015.8 786 L2273.8 1012.8 L2535 1012.8" fill="none" stroke="#1c1c1c" stroke-width="2.3" stroke-linejoin="miter"/>
<text x="2541.5" y="1022" font-family="'Liberation Sans', sans-serif" font-size="25" font-weight="700" fill="#111" textLength="98" lengthAdjust="spacingAndGlyphs" >Pharynx</text>
<path d="M2160.4 1263.3 L2355 1133.7 L2535 1133.7" fill="none" stroke="#1c1c1c" stroke-width="2.3" stroke-linejoin="miter"/>
<text x="2541.5" y="1142.7" font-family="'Liberation Sans', sans-serif" font-size="25" font-weight="700" fill="#111" textLength="104" lengthAdjust="spacingAndGlyphs" >Stomach</text>
<path d="M1982.6 1428.5 L2355 1181 L2535 1181" fill="none" stroke="#1c1c1c" stroke-width="2.3" stroke-linejoin="miter"/>
<text x="2541.5" y="1190.7" font-family="'Liberation Sans', sans-serif" font-size="25" font-weight="700" fill="#111" textLength="119" lengthAdjust="spacingAndGlyphs" >Pancreas*</text>
<path d="M2193.7 1340.8 L2354 1228.6 L2535 1228.6" fill="none" stroke="#1c1c1c" stroke-width="2.3" stroke-linejoin="miter"/>
<text x="2541.5" y="1237.7" font-family="'Liberation Sans', sans-serif" font-size="25" font-weight="400" fill="#1c1c1c" textLength="94" lengthAdjust="spacingAndGlyphs" >(Spleen)</text>
<path d="M2070.9 1495.9 L2209.5 1431 L2320 1431" fill="none" stroke="#1c1c1c" stroke-width="2.3" stroke-linejoin="miter"/>
<text x="2327.5" y="1440.6" font-family="'Liberation Sans', sans-serif" font-size="25" font-weight="400" fill="#1c1c1c" textLength="121" lengthAdjust="spacingAndGlyphs" >Transverse</text>
<text x="2327.5" y="1468.7" font-family="'Liberation Sans', sans-serif" font-size="25" font-weight="400" fill="#1c1c1c" textLength="59" lengthAdjust="spacingAndGlyphs" >colon</text>
<path d="M2209.5 1507 L2320 1507" fill="none" stroke="#1c1c1c" stroke-width="2.3" stroke-linejoin="miter"/>
<text x="2327.5" y="1517" font-family="'Liberation Sans', sans-serif" font-size="25" font-weight="400" fill="#1c1c1c" textLength="133" lengthAdjust="spacingAndGlyphs" >Descending</text>
<text x="2327.5" y="1544.8" font-family="'Liberation Sans', sans-serif" font-size="25" font-weight="400" fill="#1c1c1c" textLength="59" lengthAdjust="spacingAndGlyphs" >colon</text>
<path d="M1839.2 1583.2 L2320 1583.2" fill="none" stroke="#1c1c1c" stroke-width="2.3" stroke-linejoin="miter"/>
<text x="2327.5" y="1592.8" font-family="'Liberation Sans', sans-serif" font-size="25" font-weight="400" fill="#1c1c1c" textLength="117.5" lengthAdjust="spacingAndGlyphs" >Ascending</text>
<text x="2327.5" y="1621.2" font-family="'Liberation Sans', sans-serif" font-size="25" font-weight="400" fill="#1c1c1c" textLength="59" lengthAdjust="spacingAndGlyphs" >colon</text>
<path d="M1843 1679.7 L2008.5 1659.6 L2320 1659.6" fill="none" stroke="#1c1c1c" stroke-width="2.3" stroke-linejoin="miter"/>
<text x="2327.5" y="1669.2" font-family="'Liberation Sans', sans-serif" font-size="25" font-weight="400" fill="#1c1c1c" textLength="78.5" lengthAdjust="spacingAndGlyphs" >Cecum</text>
<path d="M2079.7 1745.3 L2206.3 1706.9 L2320 1706.9" fill="none" stroke="#1c1c1c" stroke-width="2.3" stroke-linejoin="miter"/>
<text x="2327.5" y="1716.5" font-family="'Liberation Sans', sans-serif" font-size="25" font-weight="400" fill="#1c1c1c" textLength="158" lengthAdjust="spacingAndGlyphs" >Sigmoid colon</text>
<path d="M2026 1782.6 L2206.3 1754.2 L2320 1754.2" fill="none" stroke="#1c1c1c" stroke-width="2.3" stroke-linejoin="miter"/>
<text x="2327.5" y="1764.5" font-family="'Liberation Sans', sans-serif" font-size="25" font-weight="400" fill="#1c1c1c" textLength="86" lengthAdjust="spacingAndGlyphs" >Rectum</text>
<path d="M1898.7 1743 L1950 1802.2 L2320 1802.2" fill="none" stroke="#1c1c1c" stroke-width="2.3" stroke-linejoin="miter"/>
<text x="2327.5" y="1811.8" font-family="'Liberation Sans', sans-serif" font-size="25" font-weight="400" fill="#1c1c1c" textLength="104" lengthAdjust="spacingAndGlyphs" >Appendix</text>
<path d="M2010 1848 L2206.3 1878.6 L2320 1878.6" fill="none" stroke="#1c1c1c" stroke-width="2.3" stroke-linejoin="miter"/>
<text x="2327.5" y="1888.2" font-family="'Liberation Sans', sans-serif" font-size="25" font-weight="400" fill="#1c1c1c" textLength="117" lengthAdjust="spacingAndGlyphs" >Anal canal</text>
<path d="M2494 1418.5 L2513.6 1418.5 L2513.6 1898.7 L2494 1898.7" fill="none" stroke="#1c1c1c" stroke-width="2.5" stroke-linejoin="miter"/>
<path d="M2513.6 1656.7 L2533 1656.7" fill="none" stroke="#1c1c1c" stroke-width="2.5" stroke-linejoin="miter"/>
<text x="2542.5" y="1666" font-family="'Liberation Sans', sans-serif" font-size="25" font-weight="700" fill="#111" textLength="178" lengthAdjust="spacingAndGlyphs" >Large intestine</text></g>
</g>
<g id="slidetext">
<text x="264.6" y="764" font-family="'Liberation Serif', serif" font-size="136" font-weight="400" fill="#000" textLength="532" lengthAdjust="spacingAndGlyphs" >Digestion</text>
<rect x="265" y="776.6" width="1046.5" height="1.5" fill="#8c8c8c"/>
<text x="244.5" y="860.2" font-family="'Liberation Sans', sans-serif" font-size="57" font-weight="400" fill="#000" >The Gastrointestinal System consists</text>
<text x="264.5" y="920.0" font-family="'Liberation Sans', sans-serif" font-size="57" font-weight="400" fill="#000" >of the Alimentary or GI tract that</text>
<text x="264.5" y="979.8" font-family="'Liberation Sans', sans-serif" font-size="57" font-weight="400" fill="#000" >extends from the mouth to the anus</text>
<text x="264.5" y="1039.6" font-family="'Liberation Sans', sans-serif" font-size="57" font-weight="400" fill="#000" >and the accessory GI organs</text>
<text x="244.5" y="1138.6" font-family="'Liberation Sans', sans-serif" font-size="57" font-weight="400" fill="#000" >The general functions of the GI</text>
<text x="264.5" y="1198.4" font-family="'Liberation Sans', sans-serif" font-size="57" font-weight="400" fill="#000" >system include the processes of</text>
<text x="264.5" y="1258.2" font-family="'Liberation Sans', sans-serif" font-size="57" font-weight="400" fill="#000" >Digestion, Absorption, and Excretion</text>
<text x="264.5" y="1318.0" font-family="'Liberation Sans', sans-serif" font-size="57" font-weight="400" fill="#000" >of ingested foods</text>
<text x="244.5" y="1417.6" font-family="'Liberation Sans', sans-serif" font-size="57" font-weight="400" fill="#000" >The Abdominal Quadrants</text>
<rect x="0" y="1807.5" width="1311.6" height="14" fill="#d04a18"/>
<rect x="0" y="1824.6" width="1311.6" height="102" fill="#9b2c1f"/>
<circle cx="234" cy="1497.6000000000001" r="7" fill="#d9541e"/>
<text x="284" y="1518.2" font-family="'Liberation Sans', sans-serif" font-size="57" font-weight="400" fill="#000" >RUQ: Liver &amp; Gall Bladder</text>
<circle cx="234" cy="1597.4" r="7" fill="#d9541e"/>
<text x="284" y="1618" font-family="'Liberation Sans', sans-serif" font-size="57" font-weight="400" fill="#000" >LUQ: Spleen &amp; part of Stomach</text>
<circle cx="234" cy="1697.2" r="7" fill="#d9541e"/>
<text x="284" y="1717.8" font-family="'Liberation Sans', sans-serif" font-size="57" font-weight="400" fill="#000" textLength="886.5" lengthAdjust="spacingAndGlyphs" >RLQ: Ascending Colon &amp; Appendix</text>
<circle cx="234" cy="1797.0" r="7" fill="#d9541e"/>
<text x="284" y="1817.6" font-family="'Liberation Sans', sans-serif" font-size="57" font-weight="400" fill="#000" >LLQ: Descending &amp; Sigmoid Colon</text>
<text x="19" y="1895.8" font-family="'Liberation Sans', sans-serif" font-size="34" font-weight="700" fill="#fff" textLength="540" lengthAdjust="spacingAndGlyphs" >Adapted from Pearson Education</text>
</g>
<g id="chrome">
<path d="M33 24.5 L48 16.5 L48 32.5 Z" fill="#fff"/>
<text x="58.5" y="32" font-family="'Liberation Sans', sans-serif" font-size="25" font-weight="400" fill="#fff" textLength="79" lengthAdjust="spacingAndGlyphs" stroke="#fff" stroke-width="0.6">Search</text>
<text x="160" y="32" font-family="'Liberation Sans', sans-serif" font-size="25" font-weight="400" fill="#fff" textLength="92" lengthAdjust="spacingAndGlyphs" stroke="#fff" stroke-width="0.6">6:39 PM</text>
<text x="274.5" y="32" font-family="'Liberation Sans', sans-serif" font-size="25" font-weight="400" fill="#fff" textLength="127.5" lengthAdjust="spacingAndGlyphs" stroke="#fff" stroke-width="0.6">Sun Mar 15</text>
<circle cx="1350" cy="23.7" r="5" fill="#8e9dd3"/>
<circle cx="1366" cy="23.7" r="5" fill="#8e9dd3"/>
<circle cx="1382" cy="23.7" r="5" fill="#8e9dd3"/>
<g fill="none" stroke="#fff" stroke-width="4.2" stroke-linecap="butt"><path d="M2554.5 21.5 A17.5 17.5 0 0 1 2577.5 21.5" transform=""/></g>
<g fill="none" stroke="#fff" stroke-width="4" stroke-linecap="round"><path d="M2555 21.6 Q2566 11.5 2577 21.6"/><path d="M2559.6 26.6 Q2566 20.6 2572.4 26.6" stroke-width="3.8"/></g><path d="M2566 33.6 L2561.6 29.2 Q2566 25.6 2570.4 29.2 Z" fill="#fff"/>
<text x="2589.5" y="32" font-family="'Liberation Sans', sans-serif" font-size="25" font-weight="400" fill="#fff" textLength="49.5" lengthAdjust="spacingAndGlyphs" stroke="#fff" stroke-width="0.6">57%</text>
<rect x="2650.5" y="13.2" width="45.5" height="21.6" rx="6.5" fill="none" stroke="#8a94b8" stroke-width="2"/>
<rect x="2653.8" y="16.5" width="23" height="15" rx="3.6" fill="#fff"/>
<path d="M2699 20 Q2702.3 21.2 2702.3 24 Q2702.3 26.8 2699 28 Z" fill="#8a94b8"/>
<path d="M748 112 H764 Q780 112 780 96 V64 Q780 48 796 48 H1408 Q1424 48 1424 64 V96 Q1424 112 1440 112 H1456 V113 H748 Z" fill="#294b7f"/>
<g fill="none" stroke="#97a1bf" stroke-width="2.6" stroke-linejoin="round" stroke-linecap="round"><path d="M56 77.5 Q56 75.5 57.6 74.2 L66 67.4 Q68 66 70 67.4 L78.4 74.2 Q80 75.5 80 77.5 V88.5 Q80 91.5 77 91.5 H73 V83 Q73 79.5 69.5 79.5 H66.5 Q63 79.5 63 83 V91.5 H59 Q56 91.5 56 88.5 Z"/></g>
<rect x="119.5" y="57" width="1.4" height="46" fill="#1a2750"/>
<text x="160.5" y="91" font-family="'Liberation Sans', sans-serif" font-size="30" font-weight="400" fill="#97a1bf" textLength="286.5" lengthAdjust="spacingAndGlyphs" stroke="#97a1bf" stroke-width="0.5">Untitled Notebook (1)</text>
<text x="804.5" y="91" font-family="'Liberation Sans', sans-serif" font-size="30" font-weight="400" fill="#fff" textLength="179.5" lengthAdjust="spacingAndGlyphs" stroke="#fff" stroke-width="0.6">Anatomy Lab</text>
<path d="M1002.5 77 L1009.5 84 L1016.5 77" fill="none" stroke="#dfe6f2" stroke-width="2.6" stroke-linecap="round" stroke-linejoin="round"/>
<text x="1449" y="91" font-family="'Liberation Sans', sans-serif" font-size="30" font-weight="400" fill="#97a1bf" textLength="107.5" lengthAdjust="spacingAndGlyphs" stroke="#97a1bf" stroke-width="0.5">Untitled</text>
<text x="2093" y="91" font-family="'Liberation Sans', sans-serif" font-size="30" font-weight="400" fill="#97a1bf" textLength="72.5" lengthAdjust="spacingAndGlyphs" stroke="#97a1bf" stroke-width="0.5">Unit 1</text>
<rect x="2066.8" y="54" width="1.4" height="58" fill="#1a2750"/>
<path d="M733.9 73.6 L747.1 86.8 M747.1 73.6 L733.9 86.8" stroke="#aab3cc" stroke-width="2.2" stroke-linecap="round"/>
<path d="M1377.4 73.6 L1390.6 86.8 M1390.6 73.6 L1377.4 86.8" stroke="#c5cfe2" stroke-width="2.2" stroke-linecap="round"/>
<path d="M2021.4 73.6 L2034.6 86.8 M2034.6 73.6 L2021.4 86.8" stroke="#aab3cc" stroke-width="2.2" stroke-linecap="round"/>
<path d="M2669.9 73.6 L2683.1 86.8 M2683.1 73.6 L2669.9 86.8" stroke="#aab3cc" stroke-width="2.2" stroke-linecap="round"/>
<g fill="none" stroke="#fff" stroke-width="2.8" stroke-linecap="round" stroke-linejoin="round"><rect x="24.4" y="138" width="39.2" height="35.6" rx="6.5"/><path d="M45.7 138 V173.6 M29.6 147 H40.4 M29.6 154.2 H40.4 M29.6 161.5 H40.4"/></g>
<g fill="none" stroke="#fff" stroke-width="2.8" stroke-linecap="round" stroke-linejoin="round"><circle cx="128" cy="151.8" r="14"/><path d="M138.5 162.4 L150.4 174.2"/></g>
<g fill="none" stroke="#fff" stroke-width="2.8" stroke-linecap="round" stroke-linejoin="round"><path d="M203.6 161.2 L210.3 156 Q214 174 232 165.6" stroke-width="3"/><path d="M231.8 137.2 Q233.2 144.6 240.6 146.1 Q233.2 147.6 231.8 155 Q230.4 147.6 223 146.1 Q230.4 144.6 231.8 137.2 Z" stroke-width="2.4"/></g>
<g fill="none" stroke="#fff" stroke-width="2.8" stroke-linecap="round" stroke-linejoin="round"><path d="M323.4 157.5 V143.4 Q323.4 136.4 316.4 136.4 H299.7 Q292.7 136.4 292.7 143.4 V168.2 Q292.7 175.2 299.7 175.2 H306.8"/><path d="M299.6 146.1 H316.4 M299.6 153.8 H312.6 M299.6 161.8 H304"/><path d="M311 170.2 Q319.9 159.6 328.8 170.2 Q319.9 180.6 311 170.2 Z" stroke-width="2.5"/><circle cx="319.9" cy="170.1" r="1.7" stroke-width="2.2"/></g>
<g fill="none" stroke="#fff" stroke-width="2.8" stroke-linecap="round" stroke-linejoin="round"><path d="M893 138.2 H904 Q910.6 138.2 910.6 145 V152" stroke-dasharray="8.5 5" /><rect x="875.5" y="138.2" width="35.1" height="35" rx="7" stroke-dasharray="8.6 5.2" stroke-dashoffset="2" clip-path="url(#lassoClip)"/><path d="M892.4 157.4 L912.8 164.2 L903.8 167.8 L899.8 176.2 Z" stroke-width="2.6"/></g>
<rect x="944.8" y="132" width="1.4" height="48" fill="#46679a"/>
<rect x="1730" y="132" width="1.4" height="48" fill="#46679a"/>
<rect x="962" y="120" width="72" height="72" rx="24" fill="#ccd4e2"/>
<g stroke="#151515" stroke-width="2.8" stroke-linejoin="round" stroke-linecap="round"><path d="M985.4 164.6 L1007.6 139.6 Q1012.6 134.6 1016.8 139 Q1020.6 143.4 1016 148 L992.4 171.6 Z" fill="#47bfdf"/><path d="M985.4 164.6 L992.4 171.6 L979.6 175.4 Z" fill="#ecd9a0"/><path d="M997.6 175 Q1006 175.6 1011 170 Q1015 164.6 1011.4 164.2 Q1007.6 164.4 1007.8 170.6 Q1008.6 176 1016.6 173.4" fill="none" stroke-width="2.6"/></g>
<g fill="none" stroke="#fff" stroke-width="2.8" stroke-linecap="round" stroke-linejoin="round"><g transform="translate(1094.2 155.2) rotate(-46.5)"><rect x="-19" y="-10.6" width="38.5" height="21.2" rx="6"/><path d="M5.4 -10.6 V10.6"/></g><path d="M1089.4 174.4 H1102.6"/></g>
<g fill="none" stroke="#fff" stroke-width="2.8" stroke-linecap="round" stroke-linejoin="round"><rect x="1171.8" y="140.2" width="36.6" height="31.6" stroke-width="2.6"/><path d="M1182 153 V149.6 H1198.2 V153 M1190.1 149.6 V164.6 M1186.4 164.8 H1193.8" stroke-width="2.5"/></g>
<circle cx="1171.8" cy="140.2" r="3.1" fill="#294b7f" stroke="#fff" stroke-width="2.4"/>
<circle cx="1208.4" cy="140.2" r="3.1" fill="#294b7f" stroke="#fff" stroke-width="2.4"/>
<circle cx="1171.8" cy="171.8" r="3.1" fill="#294b7f" stroke="#fff" stroke-width="2.4"/>
<circle cx="1208.4" cy="171.8" r="3.1" fill="#294b7f" stroke="#fff" stroke-width="2.4"/>
<g fill="none" stroke="#fff" stroke-width="2.8" stroke-linecap="round" stroke-linejoin="round"><path d="M1289 137.6 A19.4 19.4 0 1 0 1304.4 153.4 Q1296 154.6 1291.6 150 Q1287.6 145.6 1289 137.6 Z"/><path d="M1289 137.6 Q1299.6 143 1304.4 153.4"/><path d="M1276 162.4 Q1285 169.4 1295.4 161"/></g><circle cx="1280" cy="149.8" r="2.3" fill="#fff"/>
<g fill="none" stroke="#fff" stroke-width="2.8" stroke-linecap="round" stroke-linejoin="round"><rect x="1362.4" y="139" width="39" height="34.4" rx="6.5"/><path d="M1366.6 172.4 L1379.6 160.4 L1388.6 168.4 M1385 165 L1393.9 156.9 L1401.4 164.4" stroke-width="2.6"/><path d="M1371.4 144.6 Q1368.2 149.6 1372.2 152 Q1377.2 153.6 1378.6 148" stroke-width="2.5"/></g>
<g fill="none" stroke="#fff" stroke-width="2.8" stroke-linecap="round" stroke-linejoin="round"><path d="M1467 138.8 L1458.6 152.6 H1475.4 Z"/><circle cx="1466.5" cy="167.4" r="7.4"/><rect x="1482.6" y="160.8" width="14.4" height="13.8" rx="3.4"/><path d="M1478.6 142.4 L1491.6 138.4 L1493.2 151.4 M1487 148 L1493.2 152.2 L1497.8 147.4" stroke-width="2.6"/></g>
<g fill="none" stroke="#fff" stroke-width="2.8" stroke-linecap="round" stroke-linejoin="round"><path d="M1591.4 162.6 V145.2 Q1591.4 139 1585.2 139 H1562.8 Q1556.6 139 1556.6 145.2 V167.2 Q1556.6 173.4 1562.8 173.4 H1580.6 Z"/><path d="M1591.4 162.6 H1584 Q1580.6 162.6 1580.6 166 V173.4 M1563 146.2 H1584.6 M1563 153.8 H1574.6"/></g>
<g fill="none" stroke="#fff" stroke-width="2.8" stroke-linecap="round" stroke-linejoin="round"><rect x="-7" y="-17.5" width="14" height="35" rx="6.6" transform="translate(1663.6 162.8) rotate(47)"/><circle cx="1658.6" cy="167.2" r="3" stroke-width="2.4"/></g>
<circle cx="1684.3" cy="141.6" r="2.5" fill="#fff"/>
<path d="M1689.7 141.6 L1692.3 141.6" stroke="#fff" stroke-width="2" stroke-linecap="round"/>
<path d="M1688.1 145.4 L1690.0 147.3" stroke="#fff" stroke-width="2" stroke-linecap="round"/>
<path d="M1684.3 147.0 L1684.3 149.6" stroke="#fff" stroke-width="2" stroke-linecap="round"/>
<path d="M1680.5 145.4 L1678.6 147.3" stroke="#fff" stroke-width="2" stroke-linecap="round"/>
<path d="M1678.9 141.6 L1676.3 141.6" stroke="#fff" stroke-width="2" stroke-linecap="round"/>
<path d="M1680.5 137.8 L1678.6 135.9" stroke="#fff" stroke-width="2" stroke-linecap="round"/>
<path d="M1684.3 136.2 L1684.3 133.6" stroke="#fff" stroke-width="2" stroke-linecap="round"/>
<path d="M1688.1 137.8 L1690.0 135.9" stroke="#fff" stroke-width="2" stroke-linecap="round"/>
<g fill="none" stroke="#fff" stroke-width="2.8" stroke-linecap="round" stroke-linejoin="round"><rect x="1775.6" y="138.8" width="10.8" height="24.4" rx="5.4"/><path d="M1769.4 152.6 Q1769.4 168.4 1781 168.4 Q1792.6 168.4 1792.6 152.6 M1781 168.6 V173.4 M1773.6 173.6 H1788.4"/></g>
<g fill="none" stroke="#fff" stroke-width="2.8" stroke-linecap="round" stroke-linejoin="round" stroke-width="2.4"><circle cx="1810.6" cy="145.8" r="6.6"/><path d="M1815.6 150.8 L1820 155.2 M1807.6 145.8 H1813.6 M1810.6 142.8 V148.8" /><path d="M1803.2 173.6 V167.4 Q1803.2 160.2 1811.2 160.2 Q1819.2 160.2 1819.2 167.4 V173.6 Z"/><path d="M1811.2 164.6 V168.4 H1813.6" stroke-width="2"/></g>
<path d="M1834.6 152 L1843.2 160.2 L1851.8 152" fill="none" stroke="#8fa2c5" stroke-width="2.8" stroke-linecap="round" stroke-linejoin="round"/>
<g fill="none" stroke="#fff" stroke-width="2.8" stroke-linecap="round" stroke-linejoin="round"><path d="M2515.4 136.1 H2503.3 Q2496.3 136.1 2496.3 143.1 V169 Q2496.3 176 2503.3 176 H2520.8 Q2527.8 176 2527.8 169 V148.6 Z"/><path d="M2515.4 136.1 V144.6 Q2515.4 148.6 2519.4 148.6 H2527.8 M2511.7 155.2 V168.8 M2504.9 162 H2518.5"/></g>
<g fill="none" stroke="#fff" stroke-width="2.8" stroke-linecap="round" stroke-linejoin="round"><path d="M2600 138.2 V162.6 M2591.4 146.6 L2600 138 L2608.6 146.6 M2582 156 V166.4 Q2582 173.4 2589 173.4 H2611 Q2618 173.4 2618 166.4 V156"/></g>
<g fill="none" stroke="#fff" stroke-width="2.8" stroke-linecap="round" stroke-linejoin="round"><circle cx="2687.9" cy="155.9" r="21"/></g>
<circle cx="2677.3" cy="155.9" r="3.4" fill="#fff"/>
<circle cx="2687.9" cy="155.9" r="3.4" fill="#fff"/>
<circle cx="2698.6" cy="155.9" r="3.4" fill="#fff"/>
<rect x="16.5" y="217.5" width="175.5" height="87" rx="29" fill="#2e2d2c" stroke="#3b3a39" stroke-width="1.4"/>
<g fill="none" stroke="#8b8a89" stroke-width="2.8" stroke-linecap="round" stroke-linejoin="round"><path d="M50.6 247.2 L41.6 256 L50.6 264.8 M42.6 256 H67 Q78 256 78 264.6 Q78 273.2 67 273.2 H59.6"/></g>
<g fill="none" stroke="#8b8a89" stroke-width="2.8" stroke-linecap="round" stroke-linejoin="round"><path d="M157.8 247.2 L166.8 256 L157.8 264.8 M165.8 256 H141.4 Q130.4 256 130.4 264.6 Q130.4 273.2 141.4 273.2 H148.8"/></g>
<rect x="746.5" y="217.5" width="1239.5" height="87" rx="29" fill="#2e2d2c" stroke="#3b3a39" stroke-width="1.4"/>
<rect x="754.5" y="225" width="71.5" height="72" rx="24" fill="#3d8396"/>
<g stroke="#111" stroke-width="2.8" stroke-linejoin="round" stroke-linecap="round"><path d="M788.4 250.4 L806.6 263.4 L793 274 L776 279.6 Q770.4 281 771.8 275.6 Z" fill="#e6e4e2"/><path d="M788.4 250.4 L791.6 242 L809.6 259.4 L806.6 263.4 Z" fill="#b02622"/><path d="M775 271.6 L778.6 278.6 L771.8 280.2 Z" fill="#ecd9a0" stroke-width="1.6"/></g><path d="M789.6 280 H809" stroke="#c22a26" stroke-width="3" stroke-linecap="round"/>
<g fill="none" stroke="#fff" stroke-width="2.8" stroke-linecap="round" stroke-linejoin="round"><path d="M881 241.6 L869.4 254 L858.6 280 L886 267.4 L897.4 257.6 M869.4 254 Q874 259 878 262 Q882 265 886 267.4 M889.6 249.4 L878 262 M863 270 L868 275.6" stroke-width="2.7"/></g>
<g fill="none" stroke="#fff" stroke-width="2.8" stroke-linecap="round" stroke-linejoin="round"><path d="M967.6 241.6 L957.6 251.6 Q959 262 952.6 267.2 L947.4 274.2 Q945 279.6 952 279.6 H958.6 L962.8 274.4 Q970 272.6 976.8 271.2 L985.6 264.6 M957.6 251.6 L976.8 271.2 M952.6 267.2 L962.8 274.4" stroke-width="2.7"/></g>
<g fill="none" stroke="#fff" stroke-width="2.8" stroke-linecap="round" stroke-linejoin="round"><path d="M1034.4 267.2 L1061 241.2 L1063 245.4 L1066 244.6 L1067.4 249 L1070.6 248.6 L1071.6 252.6 L1074.4 253.4 L1047 281 L1045.6 276.8 L1042.6 277.4 L1041.6 273 L1038.4 273.6 L1037.6 269.6 Z" stroke-width="2.7"/></g>
<g fill="none" stroke="#fff" stroke-width="2.8" stroke-linecap="round" stroke-linejoin="round"><rect x="1131.6" y="243.2" width="18" height="16.4" rx="2" stroke-width="2.7"/><circle cx="1131.8" cy="263.2" r="9" stroke-width="2.7"/><path d="M1162.2 262.2 V280.4 L1144.4 271.2 Z" stroke-width="2.7"/></g>
<rect x="1193.9" y="233" width="1.3" height="56" fill="#454443"/>
<rect x="1210.5" y="224" width="73" height="73.5" rx="24" fill="#4d4d50"/>
<rect x="1230" y="259.5" width="34" height="2" rx="1" fill="#fff"/>
<rect x="1318" y="258.6" width="34" height="4.4" rx="2.2" fill="#fff"/>
<rect x="1406" y="256.8" width="34" height="8.4" rx="4.2" fill="#fff"/>
<circle cx="1511" cy="260.8" r="20" fill="#1d1c1b"/>
<circle cx="1599" cy="260.8" r="20" fill="#45b8d6"/>
<circle cx="1687" cy="260.8" r="20" fill="#1d1c1b"/>
<circle cx="1775" cy="260.8" r="30" fill="#4a4a4e"/>
<circle cx="1775" cy="260.8" r="20" fill="#9c2320"/>
<path d="M1770.6 260.6 L1775 265 L1779.4 260.6" fill="none" stroke="#fff" stroke-width="2.4" stroke-linecap="round" stroke-linejoin="round"/>
<circle cx="1863" cy="260.8" r="20" fill="#ee6baf"/>
<circle cx="1951" cy="260.8" r="20" fill="#fdeeb4"/>
</g>
</svg>
</body></html>
